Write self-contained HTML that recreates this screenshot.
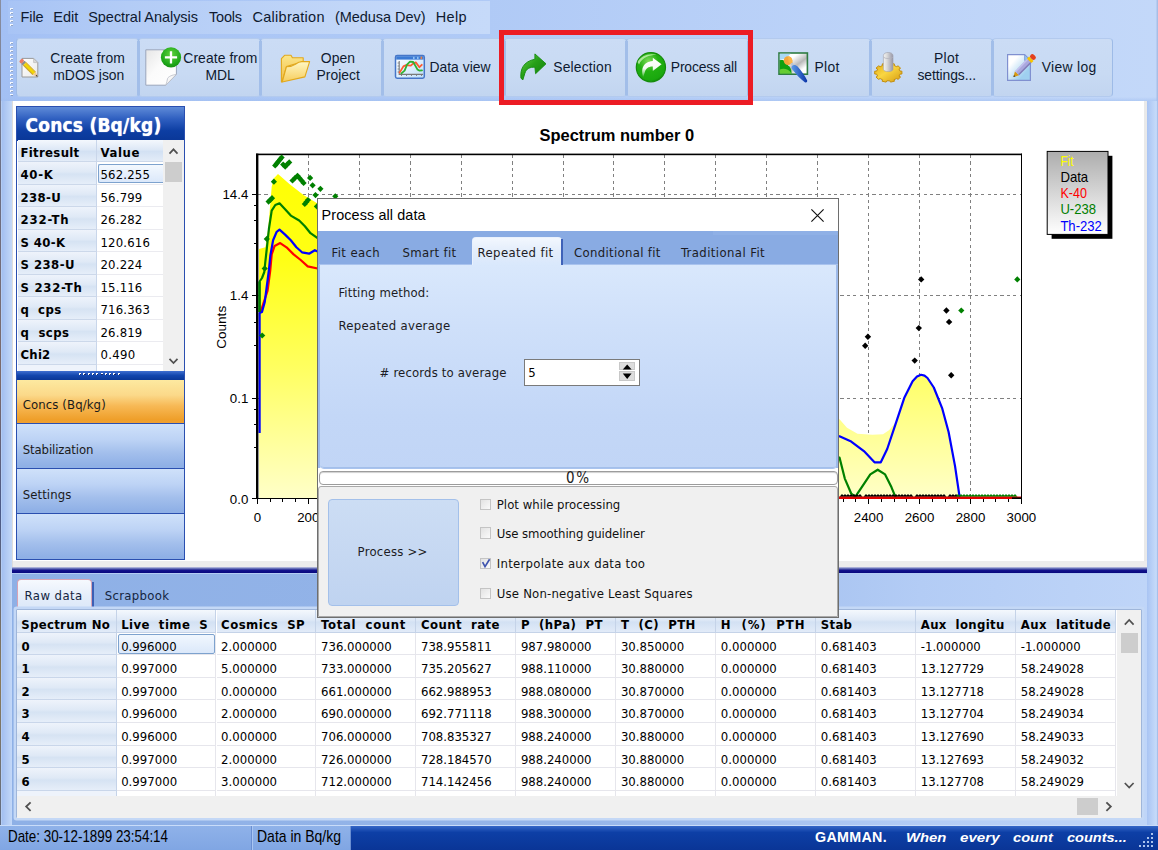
<!DOCTYPE html>
<html lang="en"><head><meta charset="utf-8"><title>Gamman - Process all data</title>
<style>
html,body{margin:0;padding:0;}
body{width:1158px;height:850px;overflow:hidden;background:#b3ccf4;font-family:"Liberation Sans",sans-serif;}
#app{position:relative;width:1158px;height:850px;overflow:hidden;}
#app div,#app span.t,#app svg{position:absolute;box-sizing:border-box;}
span.t{white-space:pre;line-height:normal;}
.tb{background:linear-gradient(#cbdcf5,#c8daf3 60%,#c2d5f0);border:1px solid #b3caee;border-left:1.4px solid #9ebbe7;border-right:1.4px solid #9ebbe7;border-radius:4px;}

</style></head>
<body>
<div id="app">
<div style="left:0px;top:0px;width:1158px;height:101px;background:linear-gradient(90deg,#a3c0f4 0,#a8c4f5 8%,#b0caf6 42%,#bbd2f8 70%,#c3d8f9 99.8%,#9fb6e0 100%);"></div>
<div style="left:0px;top:97px;width:1158px;height:4px;background:linear-gradient(rgba(160,190,240,0),rgba(160,190,240,.55));"></div>
<div style="left:0px;top:0px;width:1px;height:850px;background:linear-gradient(#8a8fa0,#6b6f86 20%,#7d6a6a 45%,#4a5a8a 60%,#8a7a5a 80%,#5a6a8a);"></div>
<div style="left:8px;top:1px;width:482px;height:33px;background:linear-gradient(90deg,#a8c4f5 0,#b3ccf6 25%,#c1d6f8 70%,#c6daf9 100%);"></div>
<div style="left:10px;top:8px;width:3px;height:19px;background:repeating-linear-gradient(#f4f8ff 0,#f4f8ff 2px,transparent 2px,transparent 4px);"></div>
<div style="left:10px;top:42px;width:3px;height:53px;background:repeating-linear-gradient(#f4f8ff 0,#f4f8ff 2px,transparent 2px,transparent 4px);"></div>
<div style="left:11px;top:9px;width:2px;height:19px;background:repeating-linear-gradient(#7f93b5 0,#7f93b5 1px,transparent 1px,transparent 4px);opacity:.8"></div>
<div style="left:11px;top:43px;width:2px;height:53px;background:repeating-linear-gradient(#7f93b5 0,#7f93b5 1px,transparent 1px,transparent 4px);opacity:.8"></div>
<span class=t style='left:20.50px;top:9.30px;font:400 14.5px "Liberation Sans", sans-serif;color:#0f1a30;letter-spacing:-0.094px;'>File</span>
<span class=t style='left:53.20px;top:9.30px;font:400 14.5px "Liberation Sans", sans-serif;color:#0f1a30;letter-spacing:0.075px;'>Edit</span>
<span class=t style='left:88.20px;top:9.30px;font:400 14.5px "Liberation Sans", sans-serif;color:#0f1a30;letter-spacing:-0.037px;'>Spectral Analysis</span>
<span class=t style='left:209.00px;top:9.30px;font:400 14.5px "Liberation Sans", sans-serif;color:#0f1a30;letter-spacing:-0.212px;'>Tools</span>
<span class=t style='left:252.50px;top:9.30px;font:400 14.5px "Liberation Sans", sans-serif;color:#0f1a30;letter-spacing:0.270px;'>Calibration</span>
<span class=t style='left:335.00px;top:9.30px;font:400 14.5px "Liberation Sans", sans-serif;color:#0f1a30;letter-spacing:-0.047px;'>(Medusa Dev)</span>
<span class=t style='left:435.80px;top:9.30px;font:400 14.5px "Liberation Sans", sans-serif;color:#0f1a30;letter-spacing:0.293px;'>Help</span>
<div class=tb style="left:15.6px;top:37.6px;width:123px;height:59.8px;"></div>
<div class=tb style="left:137.6px;top:37.6px;width:123px;height:59.8px;"></div>
<div class=tb style="left:259.6px;top:37.6px;width:123px;height:59.8px;"></div>
<div class=tb style="left:381.6px;top:37.6px;width:123px;height:59.8px;"></div>
<div class=tb style="left:503.6px;top:37.6px;width:123px;height:59.8px;"></div>
<div class=tb style="left:625.6px;top:37.6px;width:123px;height:59.8px;"></div>
<div class=tb style="left:747.6px;top:37.6px;width:123px;height:59.8px;"></div>
<div class=tb style="left:869.6px;top:37.6px;width:123px;height:59.8px;"></div>
<div class=tb style="left:991.6px;top:37.6px;width:121.4px;height:59.8px;"></div>
<div style="left:136.9px;top:40.5px;width:2.8px;height:54px;background:#a2bee9;"></div>
<div style="left:258.9px;top:40.5px;width:2.8px;height:54px;background:#a2bee9;"></div>
<div style="left:380.9px;top:40.5px;width:2.8px;height:54px;background:#a2bee9;"></div>
<div style="left:502.9px;top:40.5px;width:2.8px;height:54px;background:#a2bee9;"></div>
<div style="left:624.9px;top:40.5px;width:2.8px;height:54px;background:#a2bee9;"></div>
<div style="left:746.9px;top:40.5px;width:2.8px;height:54px;background:#a2bee9;"></div>
<div style="left:868.9px;top:40.5px;width:2.8px;height:54px;background:#a2bee9;"></div>
<div style="left:990.9px;top:40.5px;width:2.8px;height:54px;background:#a2bee9;"></div>
<span class=t style='left:50.30px;top:50.20px;font:400 13.9px "Liberation Sans", sans-serif;color:#0f1a30;letter-spacing:0.123px;'>Create from</span>
<span class=t style='left:53.30px;top:67.20px;font:400 13.9px "Liberation Sans", sans-serif;color:#0f1a30;'>mDOS json</span>
<span class=t style='left:183.30px;top:50.20px;font:400 13.9px "Liberation Sans", sans-serif;color:#0f1a30;letter-spacing:0.078px;'>Create from</span>
<span class=t style='left:205.50px;top:67.20px;font:400 13.9px "Liberation Sans", sans-serif;color:#0f1a30;letter-spacing:-0.009px;'>MDL</span>
<span class=t style='left:320.80px;top:50.20px;font:400 13.9px "Liberation Sans", sans-serif;color:#0f1a30;letter-spacing:0.054px;'>Open</span>
<span class=t style='left:316.50px;top:67.20px;font:400 13.9px "Liberation Sans", sans-serif;color:#0f1a30;letter-spacing:0.009px;'>Project</span>
<span class=t style='left:429.50px;top:58.50px;font:400 13.9px "Liberation Sans", sans-serif;color:#0f1a30;'>Data view</span>
<span class=t style='left:553.30px;top:58.50px;font:400 13.9px "Liberation Sans", sans-serif;color:#0f1a30;letter-spacing:0.149px;'>Selection</span>
<span class=t style='left:670.80px;top:58.50px;font:400 13.9px "Liberation Sans", sans-serif;color:#0f1a30;letter-spacing:-0.176px;'>Process all</span>
<span class=t style='left:814.50px;top:58.50px;font:400 13.9px "Liberation Sans", sans-serif;color:#0f1a30;letter-spacing:0.341px;'>Plot</span>
<span class=t style='left:934.00px;top:50.20px;font:400 13.9px "Liberation Sans", sans-serif;color:#0f1a30;letter-spacing:0.341px;'>Plot</span>
<span class=t style='left:917.50px;top:67.20px;font:400 13.9px "Liberation Sans", sans-serif;color:#0f1a30;letter-spacing:-0.087px;'>settings...</span>
<span class=t style='left:1041.80px;top:58.50px;font:400 13.9px "Liberation Sans", sans-serif;color:#0f1a30;letter-spacing:0.304px;'>View log</span>
<div style="left:2px;top:101px;width:10px;height:724px;background:linear-gradient(90deg,#a3bff0,#c3d8f8);"></div>
<div style="left:11.5px;top:101px;width:1132px;height:459.5px;background:#fff;border-left:1px solid #dcdcdc;"></div>
<div style="left:1143.5px;top:101px;width:3.8px;height:466.5px;background:#e9e9e9;"></div>
<div style="left:1147px;top:101px;width:11px;height:724px;background:linear-gradient(90deg,#a9c4f3,#c6dbfa 85%,#98b4e4);"></div>
<div style="left:11.5px;top:560.5px;width:1135.8px;height:7px;background:#ececec;border-left:1px solid #dcdcdc;"></div>
<div style="left:11.5px;top:567.3px;width:1135.8px;height:6.2px;background:linear-gradient(#c9cde6 0,#5c66b2 28%,#12128c 55%,#08087e 100%);"></div>
<div style="left:11.5px;top:573.5px;width:1135.8px;height:251.5px;background:linear-gradient(90deg,#8eb0e6,#95b5e9 50%,#b3ccf5 80%,#bfd5f8);"></div>
<div style="left:0px;top:824.5px;width:1158px;height:25.5px;background:linear-gradient(#3a6ccc,#0d3fa6 30%,#0a3596);"></div>
<div style="left:0px;top:824.5px;width:1158px;height:1.5px;background:#c9dcf9;"></div>
<div style="left:0px;top:826px;width:252px;height:24px;background:linear-gradient(#8fb2e9,#80a6e3);border-right:1px solid #6a8fd2;"></div>
<div style="left:252px;top:826px;width:98.5px;height:24px;background:linear-gradient(#8fb2e9,#80a6e3);border-right:1px solid #6a8fd2;border-left:1px solid #a9c6f2;"></div>
<span class=t style='left:8.00px;top:827.20px;font:400 16.2px "Liberation Sans", sans-serif;color:#000;transform:scaleX(0.8269);transform-origin:0 0;'>Date: 30-12-1899 23:54:14</span>
<span class=t style='left:256.60px;top:827.20px;font:400 16.2px "Liberation Sans", sans-serif;color:#000;transform:scaleX(0.8643);transform-origin:0 0;'>Data in Bq/kg</span>
<span class=t style='left:815.00px;top:829.00px;font:700 14.3px "Liberation Sans", sans-serif;color:#fff;letter-spacing:0.301px;'>GAMMAN.</span>
<span class=t style='left:906.40px;top:830.00px;font:italic 700 13.6px "Liberation Sans", sans-serif;color:#fff;transform:scaleX(1.0919);transform-origin:0 0;'>When</span>
<span class=t style='left:960.00px;top:830.00px;font:italic 700 13.6px "Liberation Sans", sans-serif;color:#fff;transform:scaleX(1.1145);transform-origin:0 0;'>every</span>
<span class=t style='left:1013.30px;top:830.00px;font:italic 700 13.6px "Liberation Sans", sans-serif;color:#fff;transform:scaleX(1.0757);transform-origin:0 0;'>count</span>
<span class=t style='left:1066.50px;top:830.00px;font:italic 700 13.6px "Liberation Sans", sans-serif;color:#fff;transform:scaleX(1.0682);transform-origin:0 0;'>counts...</span>
<svg style="left:1138px;top:832px" width="18" height="18" viewBox="0 0 18 18"><g fill="#a9c2ee"><rect x="13" y="1" width="2" height="2"/><rect x="9" y="5" width="2" height="2"/><rect x="13" y="5" width="2" height="2"/><rect x="5" y="9" width="2" height="2"/><rect x="9" y="9" width="2" height="2"/><rect x="13" y="9" width="2" height="2"/><rect x="1" y="13" width="2" height="2"/><rect x="5" y="13" width="2" height="2"/><rect x="9" y="13" width="2" height="2"/><rect x="13" y="13" width="2" height="2"/></g></svg>
<svg style="left:16px;top:40px" width="1100" height="56" viewBox="16 40 1100 56">
<defs>
<linearGradient id="gPaper" x1="0" y1="0" x2="1" y2="1"><stop offset="0" stop-color="#ffffff"/><stop offset="1" stop-color="#e9e9e9"/></linearGradient>
<linearGradient id="gPage2" x1="0" y1="0" x2="1" y2="1"><stop offset="0" stop-color="#e6e6e6"/><stop offset="0.45" stop-color="#fbfbfb"/><stop offset="1" stop-color="#ffffff"/></linearGradient>
<linearGradient id="gFoldB" x1="0" y1="0" x2="0" y2="1"><stop offset="0" stop-color="#fbe68a"/><stop offset="1" stop-color="#f2bd42"/></linearGradient>
<linearGradient id="gFoldF" x1="0" y1="0" x2="0" y2="1"><stop offset="0" stop-color="#fff7c4"/><stop offset="1" stop-color="#f6cd5c"/></linearGradient>
<radialGradient id="gPlus" cx="0.5" cy="0.35" r="0.7"><stop offset="0" stop-color="#5fd23a"/><stop offset="0.7" stop-color="#1fa81a"/><stop offset="1" stop-color="#138a10"/></radialGradient>
<linearGradient id="gArr" x1="0" y1="0" x2="1" y2="1"><stop offset="0" stop-color="#6fd44c"/><stop offset="0.45" stop-color="#27a018"/><stop offset="1" stop-color="#0f7c08"/></linearGradient>
<radialGradient id="gBall" cx="0.42" cy="0.3" r="0.75"><stop offset="0" stop-color="#7fdc5a"/><stop offset="0.45" stop-color="#22b012"/><stop offset="0.85" stop-color="#1aa80e"/><stop offset="1" stop-color="#128a0a"/></radialGradient>
<linearGradient id="gWArr" x1="0" y1="0" x2="0" y2="1"><stop offset="0" stop-color="#ffffff"/><stop offset="0.55" stop-color="#ffffff" stop-opacity="0.95"/><stop offset="1" stop-color="#ffffff" stop-opacity="0.15"/></linearGradient>
<linearGradient id="gWin" x1="0" y1="0" x2="1" y2="1"><stop offset="0" stop-color="#ffffff"/><stop offset="1" stop-color="#bfe0fb"/></linearGradient>
<linearGradient id="gCyl" x1="0" y1="0" x2="1" y2="0"><stop offset="0" stop-color="#f2f2f2"/><stop offset="0.35" stop-color="#dcdcdc"/><stop offset="1" stop-color="#9797a8"/></linearGradient>
<linearGradient id="gGear" x1="0" y1="0" x2="1" y2="1"><stop offset="0" stop-color="#e2aa14"/><stop offset="0.45" stop-color="#f9d642"/><stop offset="1" stop-color="#d69a0e"/></linearGradient>
<linearGradient id="gPic" x1="0" y1="0" x2="1" y2="1"><stop offset="0.35" stop-color="#ffffff"/><stop offset="0.6" stop-color="#b9b9b9"/><stop offset="0.8" stop-color="#ffffff"/></linearGradient>
<linearGradient id="gBrush" x1="0" y1="0" x2="1" y2="0"><stop offset="0" stop-color="#5b9be8"/><stop offset="1" stop-color="#0b34a8"/></linearGradient>
<linearGradient id="gLog" x1="0" y1="0" x2="1" y2="1"><stop offset="0.25" stop-color="#ffffff"/><stop offset="0.75" stop-color="#9fd0f0"/></linearGradient>
</defs>
<path d="M22 58.4H33.6L37.8 62.6V77H22Z" fill="url(#gPaper)" stroke="#9a9a9a" stroke-width="1"/>
<path d="M33.6 58.4V62.6H37.8Z" fill="#d8d8d8" stroke="#b0b0b0" stroke-width="0.6"/>
<g transform="translate(21.2,60.6) rotate(44.5)"><rect x="-1" y="-2.3" width="3.4" height="4.6" rx="1.4" fill="#ee7a62"/><rect x="2.4" y="-2.3" width="2.4" height="4.6" fill="#8c8c8c"/><rect x="4.8" y="-2.3" width="13.4" height="4.6" fill="#f4d800"/><rect x="4.8" y="-2.3" width="13.4" height="1.1" fill="#d8b04a"/><rect x="4.8" y="1.2" width="13.4" height="1.1" fill="#caa040"/><path d="M18.2 -2.3L22.8 0L18.2 2.3Z" fill="#f0c890"/><path d="M21 -0.9L23 0L21 0.9Z" fill="#3a3020"/></g>
<path d="M145.8 49.8H176.4V74.3L165.8 85.2H145.8Z" fill="url(#gPage2)" stroke="#9aa6bc" stroke-width="1"/>
<path d="M176.4 74.3C172 75 168.5 76.5 167.6 78.4C167.2 80.5 166.6 83 165.8 85.2Z" fill="#f7f7f7" stroke="#b9bcc6" stroke-width="0.8"/>
<circle cx="171" cy="57.4" r="10.1" fill="url(#gPlus)"/>
<path d="M164.9 56.3H177.1V58.6H164.9Z M169.85 51.3H172.15V63.6H169.85Z" fill="#fff"/>
<path d="M281.4 58.6L284.6 55.3H291L292.4 57.8H303.2V62H301.6L286.4 66.6L282 81.9H281.4Z" fill="url(#gFoldB)" stroke="#e2a81c" stroke-width="1.1" stroke-linejoin="round"/>
<path d="M282.2 82L286.4 66.8C290 66.8 293 65.8 295.4 64.2C297.6 62.6 299.4 61.6 301.8 61.6H309.6L304.9 76.9L282.2 82Z" fill="url(#gFoldF)" stroke="#e2a81c" stroke-width="1.1" stroke-linejoin="round"/>
<rect x="395.5" y="55.6" width="28.8" height="22.6" rx="1.6" fill="url(#gWin)" stroke="#4676c8" stroke-width="1.5"/>
<rect x="396.2" y="56.2" width="27.4" height="3.4" fill="#3b7ad4"/><rect x="413" y="56.8" width="1.6" height="2.2" fill="#8fc0f4"/><rect x="417" y="56.8" width="1.6" height="2.2" fill="#8fc0f4"/><rect x="420.6" y="56.6" width="1.6" height="2.6" fill="#f08040"/>
<path d="M399.2 61V74.4H423" fill="none" stroke="#7a7a7a" stroke-width="1.1"/><path d="M401.5 74.4V76M406.5 74.4V76M411.5 74.4V76M416.5 74.4V76M421.5 74.4V76M397.6 63H399.2M397.6 66H399.2M397.6 69H399.2M397.6 72H399.2" stroke="#7a7a7a" stroke-width="0.9"/>
<path d="M399.6 72.6L403.4 66.4L405.6 65.2L410.8 65.6L413 63.6L415.8 62.4L419.4 67.2L421.8 64.8" fill="none" stroke="#ff5a30" stroke-width="1.8" stroke-linejoin="round" stroke-linecap="round"/>
<path d="M401.4 73.4L404.6 70.6L407 64.6L410 61.6L413.2 62L417.4 69.4L419.2 70.6L422 70.3" fill="none" stroke="#2fb02f" stroke-width="1.8" stroke-linejoin="round" stroke-linecap="round"/>
<path d="M534.9 53.9L546 63.8L535.6 73.7L534.9 67.3C530.2 66.9 526.4 68.4 524.9 73.2L522.8 80L520.9 78C520.2 69.6 523 61.6 534.9 59.2Z" fill="url(#gArr)" stroke="#148a0c" stroke-width="0.9" stroke-linejoin="round"/>
<circle cx="650.9" cy="67.2" r="14.6" fill="url(#gBall)" stroke="#168c0c" stroke-width="1.2"/>
<path d="M637.6 62C641 55.5 650 52.6 657.5 55.2C652 54.6 642.5 56.6 639 64.5Z" fill="#c8f2b4" opacity="0.8"/>
<path d="M652.8 57.8L661.6 64.3L652.8 70.9V66.6C648.4 66.5 645.8 68.6 644.9 72L643.2 77C641 70.6 642 61.8 652.8 61Z" fill="url(#gWArr)"/>
<rect x="779" y="53" width="28.4" height="21.2" fill="url(#gPic)" stroke="#2f7c42" stroke-width="1.6"/>
<path d="M779.8 53.8H790.6L786 58.4L779.8 60Z" fill="#a9d9f6"/>
<path d="M779.8 60.2C784 59.2 787.2 61.6 788 65.4C790.2 66.4 791.6 69.4 791.6 73.4H779.8Z" fill="#10a010"/>
<path d="M779.8 69.6C783.2 68 788.4 68.6 791.6 73.4H779.8Z" fill="#66cc33"/>
<circle cx="788" cy="60.6" r="4.3" fill="#f3a63a"/><path d="M788 56.3C791 57 792.8 59.4 792.6 62.2L790.8 64.4L788.6 62Z" fill="#fbb646"/>
<path d="M790.6 63.8L792.6 62.4L794 64.8L792 66.2Z" fill="#b9c4d4"/>
<path d="M791.8 66.2C793.4 64.2 795.8 64.6 797.6 66.6C801.6 71 805 76 807.2 80.6C807.4 82.4 806.2 83 804.8 82.2C800.4 79 796 74.4 792.4 69.6C791.6 68.4 791.2 67.2 791.8 66.2Z" fill="url(#gBrush)"/>
<polygon points="901.9,71.2 901.9,74.0 900.0,74.1 899.0,76.1 900.6,77.0 898.1,79.3 896.4,78.6 894.0,79.8 894.5,81.2 890.5,82.1 889.8,80.8 886.8,80.8 886.1,82.1 882.1,81.2 882.6,79.8 880.2,78.6 878.5,79.3 876.0,77.0 877.6,76.1 876.6,74.1 874.7,74.0 874.7,71.2 876.6,71.1 877.6,69.1 876.0,68.2 878.5,65.9 880.2,66.6 882.6,65.4 882.1,64.0 886.1,63.1 886.8,64.4 889.8,64.4 890.5,63.1 894.5,64.0 894.0,65.4 896.4,66.6 898.1,65.9 900.6,68.2 899.0,69.1 900.0,71.1" fill="url(#gGear)" stroke="#c48e0c" stroke-width="1" stroke-linejoin="round"/>
<path d="M883.4 55.6C883.4 51.4 893 51.4 893 55.6V69.2C893 72.4 883.4 72.4 883.4 69.2Z" fill="url(#gCyl)" stroke="#a0a0a8" stroke-width="0.6"/>
<path d="M883.6 57.2C885 59 891.4 59 892.8 57.2" fill="none" stroke="#b4b4bc" stroke-width="0.8"/>
<path d="M1007.6 54.6H1024.6L1030.4 60.4V80.4H1007.6Z" fill="url(#gLog)" stroke="#8090d0" stroke-width="1.2"/>
<path d="M1024.6 54.6V60.4H1030.4Z" fill="#8fc4f0" stroke="#8090d0" stroke-width="0.8"/>
<g transform="translate(1013.4,77) rotate(-45.6)"><path d="M0 0L5.2 -2.9V2.9Z" fill="#d89a10"/><path d="M0 0L1.9 -1.05V1.05Z" fill="#3a3a3a"/><rect x="5.2" y="-2.9" width="17.4" height="5.8" fill="#aaa8de"/><rect x="5.2" y="-2.9" width="17.4" height="1.4" fill="#c4c2ee"/><rect x="5.2" y="1.5" width="17.4" height="1.4" fill="#7f7cb8"/><rect x="22.6" y="-3.1" width="3" height="6.2" fill="#f7c400"/><rect x="25.6" y="-3.1" width="4.6" height="6.2" rx="2.2" fill="#e4401c"/></g>
</svg>
<div style="left:16px;top:106px;width:169px;height:454px;background:#fff;border:1.5px solid #2a4fb0;"></div>
<div style="left:17px;top:107px;width:167px;height:33.5px;background:linear-gradient(#5f8bd8,#2f5fc0 35%,#0d3ea3 70%,#0a3797);"></div>
<span class=t style='left:25.50px;top:114.30px;font:700 19px "DejaVu Sans Condensed", "DejaVu Sans", "Liberation Sans", sans-serif;color:#fff;letter-spacing:0.196px;text-shadow:0 0 1px #dfe8ff;'>Concs (Bq/kg)</span>
<div style="left:17.5px;top:140.0px;width:79.0px;height:22.47px;background:linear-gradient(#f4f8fd,#dde8f6 45%,#d3e1f3 55%,#e3ecf8);border-right:1px solid #c9d6ea;border-bottom:1px solid #ccd8ea;"></div>
<div style="left:96.5px;top:140.0px;width:66.0px;height:22.47px;background:linear-gradient(#f4f8fd,#dde8f6 45%,#d3e1f3 55%,#e3ecf8);border-bottom:1px solid #ccd8ea;"></div>
<div style="left:17.5px;top:162.47px;width:79.0px;height:22.47px;background:linear-gradient(#eef3fb,#dfe9f6 45%,#d6e3f3 55%,#e6eef9);border-right:1px solid #c9d6ea;border-bottom:1px solid #ccd8ea;"></div>
<div style="left:96.5px;top:162.47px;width:66.0px;height:22.47px;background:#fff;border-bottom:1px solid #ebebf0;"></div>
<div style="left:17.5px;top:184.94px;width:79.0px;height:22.47px;background:linear-gradient(#eef3fb,#dfe9f6 45%,#d6e3f3 55%,#e6eef9);border-right:1px solid #c9d6ea;border-bottom:1px solid #ccd8ea;"></div>
<div style="left:96.5px;top:184.94px;width:66.0px;height:22.47px;background:#fff;border-bottom:1px solid #ebebf0;"></div>
<div style="left:17.5px;top:207.41px;width:79.0px;height:22.47px;background:linear-gradient(#eef3fb,#dfe9f6 45%,#d6e3f3 55%,#e6eef9);border-right:1px solid #c9d6ea;border-bottom:1px solid #ccd8ea;"></div>
<div style="left:96.5px;top:207.41px;width:66.0px;height:22.47px;background:#fff;border-bottom:1px solid #ebebf0;"></div>
<div style="left:17.5px;top:229.88px;width:79.0px;height:22.47px;background:linear-gradient(#eef3fb,#dfe9f6 45%,#d6e3f3 55%,#e6eef9);border-right:1px solid #c9d6ea;border-bottom:1px solid #ccd8ea;"></div>
<div style="left:96.5px;top:229.88px;width:66.0px;height:22.47px;background:#fff;border-bottom:1px solid #ebebf0;"></div>
<div style="left:17.5px;top:252.35px;width:79.0px;height:22.47px;background:linear-gradient(#eef3fb,#dfe9f6 45%,#d6e3f3 55%,#e6eef9);border-right:1px solid #c9d6ea;border-bottom:1px solid #ccd8ea;"></div>
<div style="left:96.5px;top:252.35px;width:66.0px;height:22.47px;background:#fff;border-bottom:1px solid #ebebf0;"></div>
<div style="left:17.5px;top:274.82px;width:79.0px;height:22.47px;background:linear-gradient(#eef3fb,#dfe9f6 45%,#d6e3f3 55%,#e6eef9);border-right:1px solid #c9d6ea;border-bottom:1px solid #ccd8ea;"></div>
<div style="left:96.5px;top:274.82px;width:66.0px;height:22.47px;background:#fff;border-bottom:1px solid #ebebf0;"></div>
<div style="left:17.5px;top:297.28999999999996px;width:79.0px;height:22.47px;background:linear-gradient(#eef3fb,#dfe9f6 45%,#d6e3f3 55%,#e6eef9);border-right:1px solid #c9d6ea;border-bottom:1px solid #ccd8ea;"></div>
<div style="left:96.5px;top:297.28999999999996px;width:66.0px;height:22.47px;background:#fff;border-bottom:1px solid #ebebf0;"></div>
<div style="left:17.5px;top:319.76px;width:79.0px;height:22.47px;background:linear-gradient(#eef3fb,#dfe9f6 45%,#d6e3f3 55%,#e6eef9);border-right:1px solid #c9d6ea;border-bottom:1px solid #ccd8ea;"></div>
<div style="left:96.5px;top:319.76px;width:66.0px;height:22.47px;background:#fff;border-bottom:1px solid #ebebf0;"></div>
<div style="left:17.5px;top:342.23px;width:79.0px;height:22.47px;background:linear-gradient(#eef3fb,#dfe9f6 45%,#d6e3f3 55%,#e6eef9);border-right:1px solid #c9d6ea;border-bottom:1px solid #ccd8ea;"></div>
<div style="left:96.5px;top:342.23px;width:66.0px;height:22.47px;background:#fff;border-bottom:1px solid #ebebf0;"></div>
<div style="left:17.5px;top:364.7px;width:79.0px;height:6.5px;background:#eef3fb;border-right:1px solid #c9d6ea;"></div>
<div style="left:97.5px;top:163.5px;width:65.0px;height:19.5px;background:linear-gradient(#f3f8fe,#dbe8fa);border:1px solid #7da2ce;border-right:none;border-radius:2px 0 0 2px;"></div>
<span class=t style='left:20.50px;top:144.90px;font:700 13px "DejaVu Sans Condensed", "DejaVu Sans", "Liberation Sans", sans-serif;color:#000;letter-spacing:0.312px;'>Fitresult</span>
<span class=t style='left:100.50px;top:144.90px;font:700 13px "DejaVu Sans Condensed", "DejaVu Sans", "Liberation Sans", sans-serif;color:#000;letter-spacing:0.600px;'>Value</span>
<span class=t style='left:20.50px;top:167.37px;font:700 13px "DejaVu Sans Condensed", "DejaVu Sans", "Liberation Sans", sans-serif;color:#000;letter-spacing:0.699px;'>40-K</span>
<span class=t style='left:100.50px;top:167.37px;font:400 13px "DejaVu Sans Condensed", "DejaVu Sans", "Liberation Sans", sans-serif;color:#000;letter-spacing:0.163px;'>562.255</span>
<span class=t style='left:20.50px;top:189.84px;font:700 13px "DejaVu Sans Condensed", "DejaVu Sans", "Liberation Sans", sans-serif;color:#000;letter-spacing:0.347px;'>238-U</span>
<span class=t style='left:100.50px;top:189.84px;font:400 13px "DejaVu Sans Condensed", "DejaVu Sans", "Liberation Sans", sans-serif;color:#000;letter-spacing:0.180px;'>56.799</span>
<span class=t style='left:20.50px;top:212.31px;font:700 13px "DejaVu Sans Condensed", "DejaVu Sans", "Liberation Sans", sans-serif;color:#000;letter-spacing:0.888px;'>232-Th</span>
<span class=t style='left:100.50px;top:212.31px;font:400 13px "DejaVu Sans Condensed", "DejaVu Sans", "Liberation Sans", sans-serif;color:#000;letter-spacing:0.180px;'>26.282</span>
<span class=t style='left:20.50px;top:234.78px;font:700 13px "DejaVu Sans Condensed", "DejaVu Sans", "Liberation Sans", sans-serif;color:#000;letter-spacing:0.383px;'>S 40-K</span>
<span class=t style='left:100.50px;top:234.78px;font:400 13px "DejaVu Sans Condensed", "DejaVu Sans", "Liberation Sans", sans-serif;color:#000;letter-spacing:0.163px;'>120.616</span>
<span class=t style='left:20.50px;top:257.25px;font:700 13px "DejaVu Sans Condensed", "DejaVu Sans", "Liberation Sans", sans-serif;color:#000;letter-spacing:0.462px;'>S 238-U</span>
<span class=t style='left:100.50px;top:257.25px;font:400 13px "DejaVu Sans Condensed", "DejaVu Sans", "Liberation Sans", sans-serif;color:#000;letter-spacing:0.180px;'>20.224</span>
<span class=t style='left:20.50px;top:279.72px;font:700 13px "DejaVu Sans Condensed", "DejaVu Sans", "Liberation Sans", sans-serif;color:#000;letter-spacing:0.729px;'>S 232-Th</span>
<span class=t style='left:100.50px;top:279.72px;font:400 13px "DejaVu Sans Condensed", "DejaVu Sans", "Liberation Sans", sans-serif;color:#000;letter-spacing:0.180px;'>15.116</span>
<span class=t style='left:20.50px;top:302.19px;font:700 13px "DejaVu Sans Condensed", "DejaVu Sans", "Liberation Sans", sans-serif;color:#000;letter-spacing:0.370px;'>q  cps</span>
<span class=t style='left:100.50px;top:302.19px;font:400 13px "DejaVu Sans Condensed", "DejaVu Sans", "Liberation Sans", sans-serif;color:#000;letter-spacing:0.163px;'>716.363</span>
<span class=t style='left:20.50px;top:324.66px;font:700 13px "DejaVu Sans Condensed", "DejaVu Sans", "Liberation Sans", sans-serif;color:#000;letter-spacing:0.464px;'>q  scps</span>
<span class=t style='left:100.50px;top:324.66px;font:400 13px "DejaVu Sans Condensed", "DejaVu Sans", "Liberation Sans", sans-serif;color:#000;letter-spacing:0.180px;'>26.819</span>
<span class=t style='left:20.50px;top:347.13px;font:700 13px "DejaVu Sans Condensed", "DejaVu Sans", "Liberation Sans", sans-serif;color:#000;letter-spacing:0.234px;'>Chi2</span>
<span class=t style='left:100.50px;top:347.13px;font:400 13px "DejaVu Sans Condensed", "DejaVu Sans", "Liberation Sans", sans-serif;color:#000;letter-spacing:0.303px;'>0.490</span>
<div style="left:162.5px;top:140px;width:21.0px;height:231.2px;background:#f0f0f0;"></div>
<div style="left:164.5px;top:161.5px;width:17.0px;height:20.5px;background:#cdcdcd;"></div>
<svg style="left:162.5px;top:140px" width="21" height="231" viewBox="0 0 21 231"><path d="M6.5 13.6 L10.5 9.3 L14.5 13.6" fill="none" stroke="#505050" stroke-width="1.7"/><path d="M6.5 218.8 L10.5 223.1 L14.5 218.8" fill="none" stroke="#505050" stroke-width="1.7"/></svg>
<div style="left:17px;top:371.2px;width:167px;height:8.6px;background:linear-gradient(#3f6fd0,#1246ad 50%,#0a3797);"></div>
<div style="left:79px;top:372.8px;width:43px;height:2.2px;background:repeating-linear-gradient(90deg,#fff 0,#fff 2px,transparent 2px,transparent 4.3px);"></div>
<div style="left:80px;top:373.8px;width:43px;height:1.6px;background:repeating-linear-gradient(90deg,#1a2a6a 0,#1a2a6a 1.2px,transparent 1.2px,transparent 4.3px);"></div>
<div style="left:17px;top:379.8px;width:167px;height:44.2px;background:linear-gradient(#fde9a0,#fbd98a 35%,#f7b956 60%,#ef9f2a 92%,#f0a030);border-bottom:1.5px solid #2a4fb0;"></div>
<div style="left:17px;top:424px;width:167px;height:45.3px;background:linear-gradient(#cfe1fa,#bdd3f5 35%,#a3bfec 65%,#8fb0e6 95%);border-bottom:1.5px solid #2a4fb0;"></div>
<div style="left:17px;top:469.3px;width:167px;height:45px;background:linear-gradient(#cfe1fa,#bdd3f5 35%,#a3bfec 65%,#8fb0e6 95%);border-bottom:1.5px solid #2a4fb0;"></div>
<div style="left:17px;top:514.3px;width:167px;height:44.5px;background:linear-gradient(#cfe1fa,#bdd3f5 35%,#a3bfec 65%,#8fb0e6 95%);"></div>
<span class=t style='left:22.80px;top:396.80px;font:400 13px "DejaVu Sans Condensed", "DejaVu Sans", "Liberation Sans", sans-serif;color:#1a1a1a;letter-spacing:0.100px;'>Concs (Bq/kg)</span>
<span class=t style='left:22.80px;top:441.80px;font:400 13px "DejaVu Sans Condensed", "DejaVu Sans", "Liberation Sans", sans-serif;color:#1a1a1a;letter-spacing:-0.120px;'>Stabilization</span>
<span class=t style='left:22.80px;top:486.80px;font:400 13px "DejaVu Sans Condensed", "DejaVu Sans", "Liberation Sans", sans-serif;color:#1a1a1a;letter-spacing:0.064px;'>Settings</span>
<svg style="left:186px;top:102px" width="957" height="458" viewBox="186 102 957 458">
<defs><linearGradient id="yg" gradientUnits="userSpaceOnUse" x1="0" y1="155" x2="0" y2="498"><stop offset="0" stop-color="#ffff00"/><stop offset="0.3" stop-color="#ffff14"/><stop offset="0.62" stop-color="#ffff60"/><stop offset="0.85" stop-color="#ffffa0"/><stop offset="1" stop-color="#ffffc8"/></linearGradient><linearGradient id="lg" x1="0" y1="0" x2="0" y2="1"><stop offset="0" stop-color="#adadad"/><stop offset="1" stop-color="#ffffff"/></linearGradient></defs>
<text x="539.5" y="140.9" font-family="Liberation Sans, sans-serif" font-size="16.6" font-weight="700" fill="#000" textLength="154.6" lengthAdjust="spacingAndGlyphs">Spectrum number 0</text>
<path d="M308.3 155V498 M359.3 155V498 M410.2 155V498 M461.1 155V498 M512.1 155V498 M563.0 155V498 M613.9 155V498 M664.9 155V498 M715.8 155V498 M766.7 155V498 M817.7 155V498 M868.6 155V498 M919.5 155V498 M970.5 155V498 M258 194.3H1021 M258 295.5H1021 M258 398.1H1021" stroke="#808080" stroke-width="1" stroke-dasharray="3.2 3.2" fill="none" shape-rendering="crispEdges"/>
<polygon fill="url(#yg)" points="259,498.5 259,249 265.4,247.3 268.2,229 270.3,203.6 271.7,186.7 273.9,178.2 278,174 289.4,183.9 303.5,195.1 317.6,203.6 839.5,419.3 847,427.8 857.5,433.7 872.4,434.8 883,434.2 889.3,429.9 894.6,423.6 895.7,423.6 904.2,398.1 912.6,381.2 917,376.6 921.1,374.8 924.5,375.6 927.5,378 933.8,387.5 942.3,408.7 948.6,432 955,465.9 959.7,497.7 959.7,498.5"/>
<polyline fill="none" stroke="#ff0000" stroke-width="2.2" stroke-linejoin="round" points="259.6,312 261.2,310 267.5,291 270.3,270 271.7,254.4 274.6,245.9 280.2,243.1 286.5,247.3 293.6,254.4 300.7,260 307.7,266.4 317.6,268.5 500,400 839,497.8 1021,497.8"/>
<polyline fill="none" stroke="#008000" stroke-width="2.2" stroke-linejoin="round" points="259.6,312 259.6,281.5 262,278 264.3,272 265.3,262 266.8,248.7 268.9,229 271.7,210.7 275.3,205 279.5,203.3 285.1,209.2 290.8,215.6 299.2,220.5 304.9,226.2 310.5,233.2 317.6,238.2 500,400 839.5,457.5 844.8,478.6 851.2,493.5 855.4,496.7 861.8,487.1 870.3,474.4 877.7,469.7 885.1,474.4 891.4,487.1 895.7,497.7"/>
<polyline fill="none" stroke="#0000ff" stroke-width="2.2" stroke-linejoin="round" points="259.6,433 259.6,313 262,312 264.7,302.3 268.9,270 270.3,255.8 273.1,240.3 276.7,231.8 279.5,229.7 285.1,234.6 290.8,240.3 296.4,247.3 302,252.3 309.1,253.7 314.8,250.2 317.6,251.6 500,380 839.5,436.3 851.2,441.6 863.9,451.1 874.5,462.3 880.8,462.3 887.2,449 895.7,423.6 904.2,398.1 912.6,381.2 917,376.6 921.1,374.8 924.5,375.6 927.5,378 933.8,387.5 942.3,408.7 948.6,432 955,465.9 959.7,497.7"/>
<rect x="256" y="153.6" width="2.4" height="345" fill="#000"/>
<rect x="256" y="153.6" width="766" height="1.6" fill="#000"/>
<rect x="1021" y="153.6" width="1" height="345" fill="#000"/>
<rect x="256" y="498" width="584" height="1" fill="#000"/>
<rect x="258.4" y="282" width="2.2" height="30" fill="#008000"/>
<path d="M252 194.3H256 M252 295.5H256 M252 398.1H256 M252 498.5H256 M254 205.8H256 M254 220.8H256 M254 243.8H256 M254 307.0H256 M254 322.0H256 M254 345.0H256 M254 409.6H256 M254 424.6H256 M254 447.6H256 M257.4 499V504 M270.1 499V501.5 M282.9 499V501.5 M295.6 499V501.5 M308.3 499V504 M321.1 499V501.5 M333.8 499V501.5 M346.5 499V501.5 M359.3 499V504 M372.0 499V501.5 M384.7 499V501.5 M397.5 499V501.5 M410.2 499V504 M422.9 499V501.5 M435.7 499V501.5 M448.4 499V501.5 M461.1 499V504 M473.9 499V501.5 M486.6 499V501.5 M499.3 499V501.5 M512.1 499V504 M524.8 499V501.5 M537.5 499V501.5 M550.3 499V501.5 M563.0 499V504 M575.7 499V501.5 M588.5 499V501.5 M601.2 499V501.5 M613.9 499V504 M626.7 499V501.5 M639.4 499V501.5 M652.1 499V501.5 M664.9 499V504 M677.6 499V501.5 M690.3 499V501.5 M703.1 499V501.5 M715.8 499V504 M728.5 499V501.5 M741.3 499V501.5 M754.0 499V501.5 M766.7 499V504 M779.5 499V501.5 M792.2 499V501.5 M804.9 499V501.5 M817.7 499V504 M830.4 499V501.5 M843.1 499V501.5 M855.9 499V501.5 M868.6 499V504 M881.3 499V501.5 M894.1 499V501.5 M906.8 499V501.5 M919.5 499V504 M932.3 499V501.5 M945.0 499V501.5 M957.7 499V501.5 M970.5 499V504 M983.2 499V501.5 M995.9 499V501.5 M1008.7 499V501.5 M1021.4 499V504" stroke="#000" stroke-width="1" fill="none" shape-rendering="crispEdges"/>
<text x="248.3" y="199.10000000000002" font-family="Liberation Sans, sans-serif" font-size="13.3" text-anchor="end" fill="#000">14.4</text>
<text x="248.3" y="300.3" font-family="Liberation Sans, sans-serif" font-size="13.3" text-anchor="end" fill="#000">1.4</text>
<text x="248.3" y="402.90000000000003" font-family="Liberation Sans, sans-serif" font-size="13.3" text-anchor="end" fill="#000">0.1</text>
<text x="248.3" y="503.6" font-family="Liberation Sans, sans-serif" font-size="13.3" text-anchor="end" fill="#000">0.0</text>
<text x="257.4" y="521.8" font-family="Liberation Sans, sans-serif" font-size="13.3" text-anchor="middle" fill="#000">0</text>
<text x="308.3" y="521.8" font-family="Liberation Sans, sans-serif" font-size="13.3" text-anchor="middle" fill="#000">200</text>
<text x="359.3" y="521.8" font-family="Liberation Sans, sans-serif" font-size="13.3" text-anchor="middle" fill="#000">400</text>
<text x="410.2" y="521.8" font-family="Liberation Sans, sans-serif" font-size="13.3" text-anchor="middle" fill="#000">600</text>
<text x="461.1" y="521.8" font-family="Liberation Sans, sans-serif" font-size="13.3" text-anchor="middle" fill="#000">800</text>
<text x="512.1" y="521.8" font-family="Liberation Sans, sans-serif" font-size="13.3" text-anchor="middle" fill="#000">1000</text>
<text x="563.0" y="521.8" font-family="Liberation Sans, sans-serif" font-size="13.3" text-anchor="middle" fill="#000">1200</text>
<text x="613.9" y="521.8" font-family="Liberation Sans, sans-serif" font-size="13.3" text-anchor="middle" fill="#000">1400</text>
<text x="664.9" y="521.8" font-family="Liberation Sans, sans-serif" font-size="13.3" text-anchor="middle" fill="#000">1600</text>
<text x="715.8" y="521.8" font-family="Liberation Sans, sans-serif" font-size="13.3" text-anchor="middle" fill="#000">1800</text>
<text x="766.7" y="521.8" font-family="Liberation Sans, sans-serif" font-size="13.3" text-anchor="middle" fill="#000">2000</text>
<text x="817.7" y="521.8" font-family="Liberation Sans, sans-serif" font-size="13.3" text-anchor="middle" fill="#000">2200</text>
<text x="868.6" y="521.8" font-family="Liberation Sans, sans-serif" font-size="13.3" text-anchor="middle" fill="#000">2400</text>
<text x="919.5" y="521.8" font-family="Liberation Sans, sans-serif" font-size="13.3" text-anchor="middle" fill="#000">2600</text>
<text x="970.5" y="521.8" font-family="Liberation Sans, sans-serif" font-size="13.3" text-anchor="middle" fill="#000">2800</text>
<text x="1021.4" y="521.8" font-family="Liberation Sans, sans-serif" font-size="13.3" text-anchor="middle" fill="#000">3000</text>
<text x="226.2" y="348.8" font-family="Liberation Sans, sans-serif" font-size="13.3" fill="#000" textLength="43" lengthAdjust="spacingAndGlyphs" transform="rotate(-90 226.2 348.8)">Counts</text>
<path d="M272.1 165.4L275.2 162.3L278.3 165.4L275.2 168.5Z" fill="#008000"/>
<path d="M273.7 163.4L276.8 160.3L279.9 163.4L276.8 166.5Z" fill="#008000"/>
<path d="M275.3 161.4L278.4 158.3L281.5 161.4L278.4 164.5Z" fill="#008000"/>
<path d="M276.9 159.4L280 156.3L283.1 159.4L280 162.5Z" fill="#008000"/>
<path d="M278.5 157.6L281.6 154.5L284.7 157.6L281.6 160.7Z" fill="#008000"/>
<path d="M280.1 164.6L283.2 161.5L286.3 164.6L283.2 167.7Z" fill="#008000"/>
<path d="M282.1 166.6L285.2 163.5L288.3 166.6L285.2 169.7Z" fill="#008000"/>
<path d="M284.1 164.4L287.2 161.3L290.3 164.4L287.2 167.5Z" fill="#008000"/>
<path d="M286.1 162.4L289.2 159.3L292.3 162.4L289.2 165.5Z" fill="#008000"/>
<path d="M270.8 181.7L273.9 178.6L277.0 181.7L273.9 184.8Z" fill="#008000"/>
<path d="M289.4 180.5L292.5 177.4L295.6 180.5L292.5 183.6Z" fill="#008000"/>
<path d="M291.9 178L295 174.9L298.1 178L295 181.1Z" fill="#008000"/>
<path d="M294.4 175.8L297.5 172.7L300.6 175.8L297.5 178.9Z" fill="#008000"/>
<path d="M296.5 178.2L299.6 175.1L302.7 178.2L299.6 181.3Z" fill="#008000"/>
<path d="M298.5 180.6L301.6 177.5L304.7 180.6L301.6 183.7Z" fill="#008000"/>
<path d="M300.5 183L303.6 179.9L306.7 183L303.6 186.1Z" fill="#008000"/>
<path d="M307.0 177.9L310.1 174.8L313.2 177.9L310.1 181.0Z" fill="#008000"/>
<path d="M309.5 185.3L312.6 182.2L315.7 185.3L312.6 188.4Z" fill="#008000"/>
<path d="M317.3 188.8L320.4 185.7L323.5 188.8L320.4 191.9Z" fill="#008000"/>
<path d="M312.4 195.1L315.5 192.0L318.6 195.1L315.5 198.2Z" fill="#008000"/>
<path d="M332.2 196.3L335.3 193.2L338.4 196.3L335.3 199.4Z" fill="#008000"/>
<path d="M265.5 201.6L268.6 198.5L271.7 201.6L268.6 204.7Z" fill="#008000"/>
<path d="M267.3 199.8L270.4 196.7L273.5 199.8L270.4 202.9Z" fill="#008000"/>
<path d="M268.9 198.2L272 195.1L275.1 198.2L272 201.3Z" fill="#008000"/>
<path d="M301.7 204L304.8 200.9L307.9 204L304.8 207.1Z" fill="#008000"/>
<path d="M303.3 202L306.4 198.9L309.5 202L306.4 205.1Z" fill="#008000"/>
<path d="M304.9 200L308 196.9L311.1 200L308 203.1Z" fill="#008000"/>
<path d="M313.8 206.4L316.9 203.3L320.0 206.4L316.9 209.5Z" fill="#008000"/>
<path d="M263.7 238.9L266.8 235.8L269.9 238.9L266.8 242.0Z" fill="#008000"/>
<path d="M261.6 268.5L264.7 265.4L267.8 268.5L264.7 271.6Z" fill="#008000"/>
<path d="M259.1 335.5L262.2 332.4L265.3 335.5L262.2 338.6Z" fill="#008000"/>
<path d="M958.2 310.5L961.3 307.4L964.4 310.5L961.3 313.6Z" fill="#008000"/>
<path d="M1014.2 279.4L1017.3 276.3L1020.4 279.4L1017.3 282.5Z" fill="#008000"/>
<path d="M918.0 279.4L921.2 276.2L924.4 279.4L921.2 282.6Z" fill="#000"/>
<path d="M943.2 310.5L946.4 307.3L949.6 310.5L946.4 313.7Z" fill="#000"/>
<path d="M945.9 321.9L949.1 318.7L952.3 321.9L949.1 325.1Z" fill="#000"/>
<path d="M915.6 328.1L918.8 324.9L922.0 328.1L918.8 331.3Z" fill="#000"/>
<path d="M864.7 336.8L867.9 333.6L871.1 336.8L867.9 340.0Z" fill="#000"/>
<path d="M862.0 345.7L865.2 342.5L868.4 345.7L865.2 348.9Z" fill="#000"/>
<path d="M911.5 360.6L914.7 357.4L917.9 360.6L914.7 363.8Z" fill="#000"/>
<path d="M948.0 375.3L951.2 372.1L954.4 375.3L951.2 378.5Z" fill="#000"/>
<path d="M839.4 496.8L842 494L844.6 496.8Z M842.4 496.8L845 494L847.6 496.8Z M845.4 496.8L848 494L850.6 496.8Z M848.4 496.8L851 494L853.6 496.8Z M851.4 496.8L854 494L856.6 496.8Z M854.4 496.8L857 494L859.6 496.8Z M857.4 496.8L860 494L862.6 496.8Z M863.4 496.8L866 494L868.6 496.8Z M866.4 496.8L869 494L871.6 496.8Z M869.4 496.8L872 494L874.6 496.8Z M872.4 496.8L875 494L877.6 496.8Z M875.4 496.8L878 494L880.6 496.8Z M878.4 496.8L881 494L883.6 496.8Z M881.4 496.8L884 494L886.6 496.8Z M884.4 496.8L887 494L889.6 496.8Z M887.4 496.8L890 494L892.6 496.8Z M890.4 496.8L893 494L895.6 496.8Z M893.4 496.8L896 494L898.6 496.8Z M896.4 496.8L899 494L901.6 496.8Z M899.4 496.8L902 494L904.6 496.8Z M902.4 496.8L905 494L907.6 496.8Z M905.4 496.8L908 494L910.6 496.8Z M908.4 496.8L911 494L913.6 496.8Z M914.4 496.8L917 494L919.6 496.8Z M917.4 496.8L920 494L922.6 496.8Z M920.4 496.8L923 494L925.6 496.8Z M923.4 496.8L926 494L928.6 496.8Z M926.4 496.8L929 494L931.6 496.8Z M929.4 496.8L932 494L934.6 496.8Z M932.4 496.8L935 494L937.6 496.8Z M935.4 496.8L938 494L940.6 496.8Z M938.4 496.8L941 494L943.6 496.8Z M941.4 496.8L944 494L946.6 496.8Z M947.4 496.8L950 494L952.6 496.8Z M950.4 496.8L953 494L955.6 496.8Z M953.4 496.8L956 494L958.6 496.8Z" fill="#000"/>
<path d="M955.4 496.8L958 494L960.6 496.8Z M958.4 496.8L961 494L963.6 496.8Z M961.4 496.8L964 494L966.6 496.8Z M964.4 496.8L967 494L969.6 496.8Z M967.4 496.8L970 494L972.6 496.8Z M970.4 496.8L973 494L975.6 496.8Z M973.4 496.8L976 494L978.6 496.8Z M976.4 496.8L979 494L981.6 496.8Z M979.4 496.8L982 494L984.6 496.8Z M982.4 496.8L985 494L987.6 496.8Z M985.4 496.8L988 494L990.6 496.8Z M988.4 496.8L991 494L993.6 496.8Z M991.4 496.8L994 494L996.6 496.8Z M994.4 496.8L997 494L999.6 496.8Z M997.4 496.8L1000 494L1002.6 496.8Z M1000.4 496.8L1003 494L1005.6 496.8Z M1003.4 496.8L1006 494L1008.6 496.8Z M1006.4 496.8L1009 494L1011.6 496.8Z M1009.4 496.8L1012 494L1014.6 496.8Z M1012.4 496.8L1015 494L1017.6 496.8Z" fill="#008000"/>
<rect x="839" y="496.7" width="182" height="2.2" fill="#e00000"/>
<rect x="1012" y="497.4" width="10" height="1.6" fill="#000"/>
<rect x="1051.6" y="155.8" width="60.8" height="83" fill="#000"/>
<rect x="1047.2" y="151.4" width="60.8" height="83" fill="url(#lg)" stroke="#000" stroke-width="1"/>
<text x="1060.4" y="165.9" font-family="Liberation Sans, sans-serif" font-size="14.8" fill="#ffff00" textLength="13" lengthAdjust="spacingAndGlyphs">Fit</text>
<text x="1060.4" y="182" font-family="Liberation Sans, sans-serif" font-size="14.8" fill="#000" textLength="27.8" lengthAdjust="spacingAndGlyphs">Data</text>
<text x="1060.4" y="198.2" font-family="Liberation Sans, sans-serif" font-size="14.8" fill="#ff0000" textLength="26.5" lengthAdjust="spacingAndGlyphs">K-40</text>
<text x="1060.4" y="214.4" font-family="Liberation Sans, sans-serif" font-size="14.8" fill="#008000" textLength="35.6" lengthAdjust="spacingAndGlyphs">U-238</text>
<text x="1060.4" y="230.6" font-family="Liberation Sans, sans-serif" font-size="14.8" fill="#0000ff" textLength="41.4" lengthAdjust="spacingAndGlyphs">Th-232</text>
</svg>
<div style="left:17.3px;top:579.2px;width:75px;height:29.4px;background:linear-gradient(#f6f9fe,#e4edfa 60%,#dbe7f8);border:1.5px solid #d8a3b4;border-bottom:none;border-radius:4px 4px 0 0;"></div>
<div style="left:92.3px;top:582px;width:1.6px;height:25px;background:#3b5fb5;"></div>
<span class=t style='left:24.60px;top:587.60px;font:400 13px "DejaVu Sans Condensed", "DejaVu Sans", "Liberation Sans", sans-serif;color:#15253f;letter-spacing:0.420px;'>Raw data</span>
<span class=t style='left:104.80px;top:587.60px;font:400 13px "DejaVu Sans Condensed", "DejaVu Sans", "Liberation Sans", sans-serif;color:#15253f;letter-spacing:0.304px;'>Scrapbook</span>
<div style="left:16px;top:608.8px;width:1126px;height:209.4px;background:#fff;border:1px solid #9fb6da;box-shadow:0 0 0 2.4px #c4d8f6;border-radius:1px;"></div>
<div style="left:16.6px;top:609.6px;width:99.95px;height:22.92px;background:linear-gradient(#f4f8fd,#dfe9f7 45%,#d3e1f3 55%,#e2ebf8);border-right:1px solid #c5d3e8;border-bottom:1px solid #c5d3e8;"></div>
<span class=t style='left:21.20px;top:616.90px;font:700 13px "DejaVu Sans Condensed", "DejaVu Sans", "Liberation Sans", sans-serif;color:#000;letter-spacing:0.324px;'>Spectrum No</span>
<div style="left:116.55000000000001px;top:609.6px;width:99.95px;height:22.92px;background:linear-gradient(#f4f8fd,#dfe9f7 45%,#d3e1f3 55%,#e2ebf8);border-right:1px solid #c5d3e8;border-bottom:1px solid #c5d3e8;"></div>
<span class=t style='left:121.15px;top:616.90px;font:700 13px "DejaVu Sans Condensed", "DejaVu Sans", "Liberation Sans", sans-serif;color:#000;letter-spacing:0.428px;'>Live  time  S</span>
<div style="left:216.5px;top:609.6px;width:99.95px;height:22.92px;background:linear-gradient(#f4f8fd,#dfe9f7 45%,#d3e1f3 55%,#e2ebf8);border-right:1px solid #c5d3e8;border-bottom:1px solid #c5d3e8;"></div>
<span class=t style='left:221.10px;top:616.90px;font:700 13px "DejaVu Sans Condensed", "DejaVu Sans", "Liberation Sans", sans-serif;color:#000;letter-spacing:0.472px;'>Cosmics  SP</span>
<div style="left:316.45000000000005px;top:609.6px;width:99.95px;height:22.92px;background:linear-gradient(#f4f8fd,#dfe9f7 45%,#d3e1f3 55%,#e2ebf8);border-right:1px solid #c5d3e8;border-bottom:1px solid #c5d3e8;"></div>
<span class=t style='left:321.05px;top:616.90px;font:700 13px "DejaVu Sans Condensed", "DejaVu Sans", "Liberation Sans", sans-serif;color:#000;letter-spacing:0.655px;'>Total  count</span>
<div style="left:416.40000000000003px;top:609.6px;width:99.95px;height:22.92px;background:linear-gradient(#f4f8fd,#dfe9f7 45%,#d3e1f3 55%,#e2ebf8);border-right:1px solid #c5d3e8;border-bottom:1px solid #c5d3e8;"></div>
<span class=t style='left:421.00px;top:616.90px;font:700 13px "DejaVu Sans Condensed", "DejaVu Sans", "Liberation Sans", sans-serif;color:#000;letter-spacing:0.436px;'>Count  rate</span>
<div style="left:516.35px;top:609.6px;width:99.95px;height:22.92px;background:linear-gradient(#f4f8fd,#dfe9f7 45%,#d3e1f3 55%,#e2ebf8);border-right:1px solid #c5d3e8;border-bottom:1px solid #c5d3e8;"></div>
<span class=t style='left:520.95px;top:616.90px;font:700 13px "DejaVu Sans Condensed", "DejaVu Sans", "Liberation Sans", sans-serif;color:#000;letter-spacing:0.456px;'>P  (hPa)  PT</span>
<div style="left:616.3000000000001px;top:609.6px;width:99.95px;height:22.92px;background:linear-gradient(#f4f8fd,#dfe9f7 45%,#d3e1f3 55%,#e2ebf8);border-right:1px solid #c5d3e8;border-bottom:1px solid #c5d3e8;"></div>
<span class=t style='left:620.90px;top:616.90px;font:700 13px "DejaVu Sans Condensed", "DejaVu Sans", "Liberation Sans", sans-serif;color:#000;letter-spacing:0.466px;'>T  (C)  PTH</span>
<div style="left:716.25px;top:609.6px;width:99.95px;height:22.92px;background:linear-gradient(#f4f8fd,#dfe9f7 45%,#d3e1f3 55%,#e2ebf8);border-right:1px solid #c5d3e8;border-bottom:1px solid #c5d3e8;"></div>
<span class=t style='left:720.85px;top:616.90px;font:700 13px "DejaVu Sans Condensed", "DejaVu Sans", "Liberation Sans", sans-serif;color:#000;letter-spacing:0.881px;'>H  (%)  PTH</span>
<div style="left:816.2px;top:609.6px;width:99.95px;height:22.92px;background:linear-gradient(#f4f8fd,#dfe9f7 45%,#d3e1f3 55%,#e2ebf8);border-right:1px solid #c5d3e8;border-bottom:1px solid #c5d3e8;"></div>
<span class=t style='left:820.80px;top:616.90px;font:700 13px "DejaVu Sans Condensed", "DejaVu Sans", "Liberation Sans", sans-serif;color:#000;letter-spacing:0.305px;'>Stab</span>
<div style="left:916.1500000000001px;top:609.6px;width:99.95px;height:22.92px;background:linear-gradient(#f4f8fd,#dfe9f7 45%,#d3e1f3 55%,#e2ebf8);border-right:1px solid #c5d3e8;border-bottom:1px solid #c5d3e8;"></div>
<span class=t style='left:920.75px;top:616.90px;font:700 13px "DejaVu Sans Condensed", "DejaVu Sans", "Liberation Sans", sans-serif;color:#000;letter-spacing:0.355px;'>Aux  longitu</span>
<div style="left:1016.1px;top:609.6px;width:99.95px;height:22.92px;background:linear-gradient(#f4f8fd,#dfe9f7 45%,#d3e1f3 55%,#e2ebf8);border-right:1px solid #c5d3e8;border-bottom:1px solid #c5d3e8;"></div>
<span class=t style='left:1020.70px;top:616.90px;font:700 13px "DejaVu Sans Condensed", "DejaVu Sans", "Liberation Sans", sans-serif;color:#000;letter-spacing:0.440px;'>Aux  latitude</span>
<div style="left:16.6px;top:632.52px;width:99.95px;height:22.62px;background:linear-gradient(#eef3fb,#dfe9f6 45%,#d6e3f3 55%,#e6eef9);border-right:1px solid #c5d3e8;border-bottom:1px solid #c9d6ea;"></div>
<div style="left:116.55000000000001px;top:632.52px;width:99.95px;height:22.62px;border-right:1px solid #e6e6ec;border-bottom:1px solid #e6e6ec;"></div>
<div style="left:216.5px;top:632.52px;width:99.95px;height:22.62px;border-right:1px solid #e6e6ec;border-bottom:1px solid #e6e6ec;"></div>
<div style="left:316.45000000000005px;top:632.52px;width:99.95px;height:22.62px;border-right:1px solid #e6e6ec;border-bottom:1px solid #e6e6ec;"></div>
<div style="left:416.40000000000003px;top:632.52px;width:99.95px;height:22.62px;border-right:1px solid #e6e6ec;border-bottom:1px solid #e6e6ec;"></div>
<div style="left:516.35px;top:632.52px;width:99.95px;height:22.62px;border-right:1px solid #e6e6ec;border-bottom:1px solid #e6e6ec;"></div>
<div style="left:616.3000000000001px;top:632.52px;width:99.95px;height:22.62px;border-right:1px solid #e6e6ec;border-bottom:1px solid #e6e6ec;"></div>
<div style="left:716.25px;top:632.52px;width:99.95px;height:22.62px;border-right:1px solid #e6e6ec;border-bottom:1px solid #e6e6ec;"></div>
<div style="left:816.2px;top:632.52px;width:99.95px;height:22.62px;border-right:1px solid #e6e6ec;border-bottom:1px solid #e6e6ec;"></div>
<div style="left:916.1500000000001px;top:632.52px;width:99.95px;height:22.62px;border-right:1px solid #e6e6ec;border-bottom:1px solid #e6e6ec;"></div>
<div style="left:1016.1px;top:632.52px;width:99.95px;height:22.62px;border-right:1px solid #e6e6ec;border-bottom:1px solid #e6e6ec;"></div>
<span class=t style='left:21.60px;top:638.62px;font:700 13px "DejaVu Sans Condensed", "DejaVu Sans", "Liberation Sans", sans-serif;color:#000;'>0</span>
<span class=t style='left:121.15px;top:638.62px;font:400 13px "DejaVu Sans Condensed", "DejaVu Sans", "Liberation Sans", sans-serif;color:#000;letter-spacing:0.025px;'>0.996000</span>
<span class=t style='left:221.10px;top:638.62px;font:400 13px "DejaVu Sans Condensed", "DejaVu Sans", "Liberation Sans", sans-serif;color:#000;letter-spacing:0.025px;'>2.000000</span>
<span class=t style='left:321.05px;top:638.62px;font:400 13px "DejaVu Sans Condensed", "DejaVu Sans", "Liberation Sans", sans-serif;color:#000;letter-spacing:-0.007px;'>736.000000</span>
<span class=t style='left:421.00px;top:638.62px;font:400 13px "DejaVu Sans Condensed", "DejaVu Sans", "Liberation Sans", sans-serif;color:#000;letter-spacing:-0.007px;'>738.955811</span>
<span class=t style='left:520.95px;top:638.62px;font:400 13px "DejaVu Sans Condensed", "DejaVu Sans", "Liberation Sans", sans-serif;color:#000;letter-spacing:-0.007px;'>987.980000</span>
<span class=t style='left:620.90px;top:638.62px;font:400 13px "DejaVu Sans Condensed", "DejaVu Sans", "Liberation Sans", sans-serif;color:#000;letter-spacing:0.007px;'>30.850000</span>
<span class=t style='left:720.85px;top:638.62px;font:400 13px "DejaVu Sans Condensed", "DejaVu Sans", "Liberation Sans", sans-serif;color:#000;letter-spacing:0.025px;'>0.000000</span>
<span class=t style='left:820.80px;top:638.62px;font:400 13px "DejaVu Sans Condensed", "DejaVu Sans", "Liberation Sans", sans-serif;color:#000;letter-spacing:0.025px;'>0.681403</span>
<span class=t style='left:920.75px;top:638.62px;font:400 13px "DejaVu Sans Condensed", "DejaVu Sans", "Liberation Sans", sans-serif;color:#000;'>-1.000000</span>
<span class=t style='left:1020.70px;top:638.62px;font:400 13px "DejaVu Sans Condensed", "DejaVu Sans", "Liberation Sans", sans-serif;color:#000;'>-1.000000</span>
<div style="left:16.6px;top:655.14px;width:99.95px;height:22.62px;background:linear-gradient(#eef3fb,#dfe9f6 45%,#d6e3f3 55%,#e6eef9);border-right:1px solid #c5d3e8;border-bottom:1px solid #c9d6ea;"></div>
<div style="left:116.55000000000001px;top:655.14px;width:99.95px;height:22.62px;border-right:1px solid #e6e6ec;border-bottom:1px solid #e6e6ec;"></div>
<div style="left:216.5px;top:655.14px;width:99.95px;height:22.62px;border-right:1px solid #e6e6ec;border-bottom:1px solid #e6e6ec;"></div>
<div style="left:316.45000000000005px;top:655.14px;width:99.95px;height:22.62px;border-right:1px solid #e6e6ec;border-bottom:1px solid #e6e6ec;"></div>
<div style="left:416.40000000000003px;top:655.14px;width:99.95px;height:22.62px;border-right:1px solid #e6e6ec;border-bottom:1px solid #e6e6ec;"></div>
<div style="left:516.35px;top:655.14px;width:99.95px;height:22.62px;border-right:1px solid #e6e6ec;border-bottom:1px solid #e6e6ec;"></div>
<div style="left:616.3000000000001px;top:655.14px;width:99.95px;height:22.62px;border-right:1px solid #e6e6ec;border-bottom:1px solid #e6e6ec;"></div>
<div style="left:716.25px;top:655.14px;width:99.95px;height:22.62px;border-right:1px solid #e6e6ec;border-bottom:1px solid #e6e6ec;"></div>
<div style="left:816.2px;top:655.14px;width:99.95px;height:22.62px;border-right:1px solid #e6e6ec;border-bottom:1px solid #e6e6ec;"></div>
<div style="left:916.1500000000001px;top:655.14px;width:99.95px;height:22.62px;border-right:1px solid #e6e6ec;border-bottom:1px solid #e6e6ec;"></div>
<div style="left:1016.1px;top:655.14px;width:99.95px;height:22.62px;border-right:1px solid #e6e6ec;border-bottom:1px solid #e6e6ec;"></div>
<span class=t style='left:21.60px;top:661.24px;font:700 13px "DejaVu Sans Condensed", "DejaVu Sans", "Liberation Sans", sans-serif;color:#000;'>1</span>
<span class=t style='left:121.15px;top:661.24px;font:400 13px "DejaVu Sans Condensed", "DejaVu Sans", "Liberation Sans", sans-serif;color:#000;letter-spacing:0.025px;'>0.997000</span>
<span class=t style='left:221.10px;top:661.24px;font:400 13px "DejaVu Sans Condensed", "DejaVu Sans", "Liberation Sans", sans-serif;color:#000;letter-spacing:0.025px;'>5.000000</span>
<span class=t style='left:321.05px;top:661.24px;font:400 13px "DejaVu Sans Condensed", "DejaVu Sans", "Liberation Sans", sans-serif;color:#000;letter-spacing:-0.007px;'>733.000000</span>
<span class=t style='left:421.00px;top:661.24px;font:400 13px "DejaVu Sans Condensed", "DejaVu Sans", "Liberation Sans", sans-serif;color:#000;letter-spacing:-0.007px;'>735.205627</span>
<span class=t style='left:520.95px;top:661.24px;font:400 13px "DejaVu Sans Condensed", "DejaVu Sans", "Liberation Sans", sans-serif;color:#000;letter-spacing:-0.007px;'>988.110000</span>
<span class=t style='left:620.90px;top:661.24px;font:400 13px "DejaVu Sans Condensed", "DejaVu Sans", "Liberation Sans", sans-serif;color:#000;letter-spacing:0.007px;'>30.880000</span>
<span class=t style='left:720.85px;top:661.24px;font:400 13px "DejaVu Sans Condensed", "DejaVu Sans", "Liberation Sans", sans-serif;color:#000;letter-spacing:0.025px;'>0.000000</span>
<span class=t style='left:820.80px;top:661.24px;font:400 13px "DejaVu Sans Condensed", "DejaVu Sans", "Liberation Sans", sans-serif;color:#000;letter-spacing:0.025px;'>0.681403</span>
<span class=t style='left:920.75px;top:661.24px;font:400 13px "DejaVu Sans Condensed", "DejaVu Sans", "Liberation Sans", sans-serif;color:#000;letter-spacing:0.007px;'>13.127729</span>
<span class=t style='left:1020.70px;top:661.24px;font:400 13px "DejaVu Sans Condensed", "DejaVu Sans", "Liberation Sans", sans-serif;color:#000;letter-spacing:0.007px;'>58.249028</span>
<div style="left:16.6px;top:677.76px;width:99.95px;height:22.62px;background:linear-gradient(#eef3fb,#dfe9f6 45%,#d6e3f3 55%,#e6eef9);border-right:1px solid #c5d3e8;border-bottom:1px solid #c9d6ea;"></div>
<div style="left:116.55000000000001px;top:677.76px;width:99.95px;height:22.62px;border-right:1px solid #e6e6ec;border-bottom:1px solid #e6e6ec;"></div>
<div style="left:216.5px;top:677.76px;width:99.95px;height:22.62px;border-right:1px solid #e6e6ec;border-bottom:1px solid #e6e6ec;"></div>
<div style="left:316.45000000000005px;top:677.76px;width:99.95px;height:22.62px;border-right:1px solid #e6e6ec;border-bottom:1px solid #e6e6ec;"></div>
<div style="left:416.40000000000003px;top:677.76px;width:99.95px;height:22.62px;border-right:1px solid #e6e6ec;border-bottom:1px solid #e6e6ec;"></div>
<div style="left:516.35px;top:677.76px;width:99.95px;height:22.62px;border-right:1px solid #e6e6ec;border-bottom:1px solid #e6e6ec;"></div>
<div style="left:616.3000000000001px;top:677.76px;width:99.95px;height:22.62px;border-right:1px solid #e6e6ec;border-bottom:1px solid #e6e6ec;"></div>
<div style="left:716.25px;top:677.76px;width:99.95px;height:22.62px;border-right:1px solid #e6e6ec;border-bottom:1px solid #e6e6ec;"></div>
<div style="left:816.2px;top:677.76px;width:99.95px;height:22.62px;border-right:1px solid #e6e6ec;border-bottom:1px solid #e6e6ec;"></div>
<div style="left:916.1500000000001px;top:677.76px;width:99.95px;height:22.62px;border-right:1px solid #e6e6ec;border-bottom:1px solid #e6e6ec;"></div>
<div style="left:1016.1px;top:677.76px;width:99.95px;height:22.62px;border-right:1px solid #e6e6ec;border-bottom:1px solid #e6e6ec;"></div>
<span class=t style='left:21.60px;top:683.86px;font:700 13px "DejaVu Sans Condensed", "DejaVu Sans", "Liberation Sans", sans-serif;color:#000;'>2</span>
<span class=t style='left:121.15px;top:683.86px;font:400 13px "DejaVu Sans Condensed", "DejaVu Sans", "Liberation Sans", sans-serif;color:#000;letter-spacing:0.025px;'>0.997000</span>
<span class=t style='left:221.10px;top:683.86px;font:400 13px "DejaVu Sans Condensed", "DejaVu Sans", "Liberation Sans", sans-serif;color:#000;letter-spacing:0.025px;'>0.000000</span>
<span class=t style='left:321.05px;top:683.86px;font:400 13px "DejaVu Sans Condensed", "DejaVu Sans", "Liberation Sans", sans-serif;color:#000;letter-spacing:-0.007px;'>661.000000</span>
<span class=t style='left:421.00px;top:683.86px;font:400 13px "DejaVu Sans Condensed", "DejaVu Sans", "Liberation Sans", sans-serif;color:#000;letter-spacing:-0.007px;'>662.988953</span>
<span class=t style='left:520.95px;top:683.86px;font:400 13px "DejaVu Sans Condensed", "DejaVu Sans", "Liberation Sans", sans-serif;color:#000;letter-spacing:-0.007px;'>988.080000</span>
<span class=t style='left:620.90px;top:683.86px;font:400 13px "DejaVu Sans Condensed", "DejaVu Sans", "Liberation Sans", sans-serif;color:#000;letter-spacing:0.007px;'>30.870000</span>
<span class=t style='left:720.85px;top:683.86px;font:400 13px "DejaVu Sans Condensed", "DejaVu Sans", "Liberation Sans", sans-serif;color:#000;letter-spacing:0.025px;'>0.000000</span>
<span class=t style='left:820.80px;top:683.86px;font:400 13px "DejaVu Sans Condensed", "DejaVu Sans", "Liberation Sans", sans-serif;color:#000;letter-spacing:0.025px;'>0.681403</span>
<span class=t style='left:920.75px;top:683.86px;font:400 13px "DejaVu Sans Condensed", "DejaVu Sans", "Liberation Sans", sans-serif;color:#000;letter-spacing:0.007px;'>13.127718</span>
<span class=t style='left:1020.70px;top:683.86px;font:400 13px "DejaVu Sans Condensed", "DejaVu Sans", "Liberation Sans", sans-serif;color:#000;letter-spacing:0.007px;'>58.249028</span>
<div style="left:16.6px;top:700.38px;width:99.95px;height:22.62px;background:linear-gradient(#eef3fb,#dfe9f6 45%,#d6e3f3 55%,#e6eef9);border-right:1px solid #c5d3e8;border-bottom:1px solid #c9d6ea;"></div>
<div style="left:116.55000000000001px;top:700.38px;width:99.95px;height:22.62px;border-right:1px solid #e6e6ec;border-bottom:1px solid #e6e6ec;"></div>
<div style="left:216.5px;top:700.38px;width:99.95px;height:22.62px;border-right:1px solid #e6e6ec;border-bottom:1px solid #e6e6ec;"></div>
<div style="left:316.45000000000005px;top:700.38px;width:99.95px;height:22.62px;border-right:1px solid #e6e6ec;border-bottom:1px solid #e6e6ec;"></div>
<div style="left:416.40000000000003px;top:700.38px;width:99.95px;height:22.62px;border-right:1px solid #e6e6ec;border-bottom:1px solid #e6e6ec;"></div>
<div style="left:516.35px;top:700.38px;width:99.95px;height:22.62px;border-right:1px solid #e6e6ec;border-bottom:1px solid #e6e6ec;"></div>
<div style="left:616.3000000000001px;top:700.38px;width:99.95px;height:22.62px;border-right:1px solid #e6e6ec;border-bottom:1px solid #e6e6ec;"></div>
<div style="left:716.25px;top:700.38px;width:99.95px;height:22.62px;border-right:1px solid #e6e6ec;border-bottom:1px solid #e6e6ec;"></div>
<div style="left:816.2px;top:700.38px;width:99.95px;height:22.62px;border-right:1px solid #e6e6ec;border-bottom:1px solid #e6e6ec;"></div>
<div style="left:916.1500000000001px;top:700.38px;width:99.95px;height:22.62px;border-right:1px solid #e6e6ec;border-bottom:1px solid #e6e6ec;"></div>
<div style="left:1016.1px;top:700.38px;width:99.95px;height:22.62px;border-right:1px solid #e6e6ec;border-bottom:1px solid #e6e6ec;"></div>
<span class=t style='left:21.60px;top:706.48px;font:700 13px "DejaVu Sans Condensed", "DejaVu Sans", "Liberation Sans", sans-serif;color:#000;'>3</span>
<span class=t style='left:121.15px;top:706.48px;font:400 13px "DejaVu Sans Condensed", "DejaVu Sans", "Liberation Sans", sans-serif;color:#000;letter-spacing:0.025px;'>0.996000</span>
<span class=t style='left:221.10px;top:706.48px;font:400 13px "DejaVu Sans Condensed", "DejaVu Sans", "Liberation Sans", sans-serif;color:#000;letter-spacing:0.025px;'>2.000000</span>
<span class=t style='left:321.05px;top:706.48px;font:400 13px "DejaVu Sans Condensed", "DejaVu Sans", "Liberation Sans", sans-serif;color:#000;letter-spacing:-0.007px;'>690.000000</span>
<span class=t style='left:421.00px;top:706.48px;font:400 13px "DejaVu Sans Condensed", "DejaVu Sans", "Liberation Sans", sans-serif;color:#000;letter-spacing:-0.007px;'>692.771118</span>
<span class=t style='left:520.95px;top:706.48px;font:400 13px "DejaVu Sans Condensed", "DejaVu Sans", "Liberation Sans", sans-serif;color:#000;letter-spacing:-0.007px;'>988.300000</span>
<span class=t style='left:620.90px;top:706.48px;font:400 13px "DejaVu Sans Condensed", "DejaVu Sans", "Liberation Sans", sans-serif;color:#000;letter-spacing:0.007px;'>30.870000</span>
<span class=t style='left:720.85px;top:706.48px;font:400 13px "DejaVu Sans Condensed", "DejaVu Sans", "Liberation Sans", sans-serif;color:#000;letter-spacing:0.025px;'>0.000000</span>
<span class=t style='left:820.80px;top:706.48px;font:400 13px "DejaVu Sans Condensed", "DejaVu Sans", "Liberation Sans", sans-serif;color:#000;letter-spacing:0.025px;'>0.681403</span>
<span class=t style='left:920.75px;top:706.48px;font:400 13px "DejaVu Sans Condensed", "DejaVu Sans", "Liberation Sans", sans-serif;color:#000;letter-spacing:0.007px;'>13.127704</span>
<span class=t style='left:1020.70px;top:706.48px;font:400 13px "DejaVu Sans Condensed", "DejaVu Sans", "Liberation Sans", sans-serif;color:#000;letter-spacing:0.007px;'>58.249034</span>
<div style="left:16.6px;top:723.0px;width:99.95px;height:22.62px;background:linear-gradient(#eef3fb,#dfe9f6 45%,#d6e3f3 55%,#e6eef9);border-right:1px solid #c5d3e8;border-bottom:1px solid #c9d6ea;"></div>
<div style="left:116.55000000000001px;top:723.0px;width:99.95px;height:22.62px;border-right:1px solid #e6e6ec;border-bottom:1px solid #e6e6ec;"></div>
<div style="left:216.5px;top:723.0px;width:99.95px;height:22.62px;border-right:1px solid #e6e6ec;border-bottom:1px solid #e6e6ec;"></div>
<div style="left:316.45000000000005px;top:723.0px;width:99.95px;height:22.62px;border-right:1px solid #e6e6ec;border-bottom:1px solid #e6e6ec;"></div>
<div style="left:416.40000000000003px;top:723.0px;width:99.95px;height:22.62px;border-right:1px solid #e6e6ec;border-bottom:1px solid #e6e6ec;"></div>
<div style="left:516.35px;top:723.0px;width:99.95px;height:22.62px;border-right:1px solid #e6e6ec;border-bottom:1px solid #e6e6ec;"></div>
<div style="left:616.3000000000001px;top:723.0px;width:99.95px;height:22.62px;border-right:1px solid #e6e6ec;border-bottom:1px solid #e6e6ec;"></div>
<div style="left:716.25px;top:723.0px;width:99.95px;height:22.62px;border-right:1px solid #e6e6ec;border-bottom:1px solid #e6e6ec;"></div>
<div style="left:816.2px;top:723.0px;width:99.95px;height:22.62px;border-right:1px solid #e6e6ec;border-bottom:1px solid #e6e6ec;"></div>
<div style="left:916.1500000000001px;top:723.0px;width:99.95px;height:22.62px;border-right:1px solid #e6e6ec;border-bottom:1px solid #e6e6ec;"></div>
<div style="left:1016.1px;top:723.0px;width:99.95px;height:22.62px;border-right:1px solid #e6e6ec;border-bottom:1px solid #e6e6ec;"></div>
<span class=t style='left:21.60px;top:729.10px;font:700 13px "DejaVu Sans Condensed", "DejaVu Sans", "Liberation Sans", sans-serif;color:#000;'>4</span>
<span class=t style='left:121.15px;top:729.10px;font:400 13px "DejaVu Sans Condensed", "DejaVu Sans", "Liberation Sans", sans-serif;color:#000;letter-spacing:0.025px;'>0.996000</span>
<span class=t style='left:221.10px;top:729.10px;font:400 13px "DejaVu Sans Condensed", "DejaVu Sans", "Liberation Sans", sans-serif;color:#000;letter-spacing:0.025px;'>0.000000</span>
<span class=t style='left:321.05px;top:729.10px;font:400 13px "DejaVu Sans Condensed", "DejaVu Sans", "Liberation Sans", sans-serif;color:#000;letter-spacing:-0.007px;'>706.000000</span>
<span class=t style='left:421.00px;top:729.10px;font:400 13px "DejaVu Sans Condensed", "DejaVu Sans", "Liberation Sans", sans-serif;color:#000;letter-spacing:-0.007px;'>708.835327</span>
<span class=t style='left:520.95px;top:729.10px;font:400 13px "DejaVu Sans Condensed", "DejaVu Sans", "Liberation Sans", sans-serif;color:#000;letter-spacing:-0.007px;'>988.240000</span>
<span class=t style='left:620.90px;top:729.10px;font:400 13px "DejaVu Sans Condensed", "DejaVu Sans", "Liberation Sans", sans-serif;color:#000;letter-spacing:0.007px;'>30.880000</span>
<span class=t style='left:720.85px;top:729.10px;font:400 13px "DejaVu Sans Condensed", "DejaVu Sans", "Liberation Sans", sans-serif;color:#000;letter-spacing:0.025px;'>0.000000</span>
<span class=t style='left:820.80px;top:729.10px;font:400 13px "DejaVu Sans Condensed", "DejaVu Sans", "Liberation Sans", sans-serif;color:#000;letter-spacing:0.025px;'>0.681403</span>
<span class=t style='left:920.75px;top:729.10px;font:400 13px "DejaVu Sans Condensed", "DejaVu Sans", "Liberation Sans", sans-serif;color:#000;letter-spacing:0.007px;'>13.127690</span>
<span class=t style='left:1020.70px;top:729.10px;font:400 13px "DejaVu Sans Condensed", "DejaVu Sans", "Liberation Sans", sans-serif;color:#000;letter-spacing:0.007px;'>58.249033</span>
<div style="left:16.6px;top:745.62px;width:99.95px;height:22.62px;background:linear-gradient(#eef3fb,#dfe9f6 45%,#d6e3f3 55%,#e6eef9);border-right:1px solid #c5d3e8;border-bottom:1px solid #c9d6ea;"></div>
<div style="left:116.55000000000001px;top:745.62px;width:99.95px;height:22.62px;border-right:1px solid #e6e6ec;border-bottom:1px solid #e6e6ec;"></div>
<div style="left:216.5px;top:745.62px;width:99.95px;height:22.62px;border-right:1px solid #e6e6ec;border-bottom:1px solid #e6e6ec;"></div>
<div style="left:316.45000000000005px;top:745.62px;width:99.95px;height:22.62px;border-right:1px solid #e6e6ec;border-bottom:1px solid #e6e6ec;"></div>
<div style="left:416.40000000000003px;top:745.62px;width:99.95px;height:22.62px;border-right:1px solid #e6e6ec;border-bottom:1px solid #e6e6ec;"></div>
<div style="left:516.35px;top:745.62px;width:99.95px;height:22.62px;border-right:1px solid #e6e6ec;border-bottom:1px solid #e6e6ec;"></div>
<div style="left:616.3000000000001px;top:745.62px;width:99.95px;height:22.62px;border-right:1px solid #e6e6ec;border-bottom:1px solid #e6e6ec;"></div>
<div style="left:716.25px;top:745.62px;width:99.95px;height:22.62px;border-right:1px solid #e6e6ec;border-bottom:1px solid #e6e6ec;"></div>
<div style="left:816.2px;top:745.62px;width:99.95px;height:22.62px;border-right:1px solid #e6e6ec;border-bottom:1px solid #e6e6ec;"></div>
<div style="left:916.1500000000001px;top:745.62px;width:99.95px;height:22.62px;border-right:1px solid #e6e6ec;border-bottom:1px solid #e6e6ec;"></div>
<div style="left:1016.1px;top:745.62px;width:99.95px;height:22.62px;border-right:1px solid #e6e6ec;border-bottom:1px solid #e6e6ec;"></div>
<span class=t style='left:21.60px;top:751.72px;font:700 13px "DejaVu Sans Condensed", "DejaVu Sans", "Liberation Sans", sans-serif;color:#000;'>5</span>
<span class=t style='left:121.15px;top:751.72px;font:400 13px "DejaVu Sans Condensed", "DejaVu Sans", "Liberation Sans", sans-serif;color:#000;letter-spacing:0.025px;'>0.997000</span>
<span class=t style='left:221.10px;top:751.72px;font:400 13px "DejaVu Sans Condensed", "DejaVu Sans", "Liberation Sans", sans-serif;color:#000;letter-spacing:0.025px;'>2.000000</span>
<span class=t style='left:321.05px;top:751.72px;font:400 13px "DejaVu Sans Condensed", "DejaVu Sans", "Liberation Sans", sans-serif;color:#000;letter-spacing:-0.007px;'>726.000000</span>
<span class=t style='left:421.00px;top:751.72px;font:400 13px "DejaVu Sans Condensed", "DejaVu Sans", "Liberation Sans", sans-serif;color:#000;letter-spacing:-0.007px;'>728.184570</span>
<span class=t style='left:520.95px;top:751.72px;font:400 13px "DejaVu Sans Condensed", "DejaVu Sans", "Liberation Sans", sans-serif;color:#000;letter-spacing:-0.007px;'>988.240000</span>
<span class=t style='left:620.90px;top:751.72px;font:400 13px "DejaVu Sans Condensed", "DejaVu Sans", "Liberation Sans", sans-serif;color:#000;letter-spacing:0.007px;'>30.880000</span>
<span class=t style='left:720.85px;top:751.72px;font:400 13px "DejaVu Sans Condensed", "DejaVu Sans", "Liberation Sans", sans-serif;color:#000;letter-spacing:0.025px;'>0.000000</span>
<span class=t style='left:820.80px;top:751.72px;font:400 13px "DejaVu Sans Condensed", "DejaVu Sans", "Liberation Sans", sans-serif;color:#000;letter-spacing:0.025px;'>0.681403</span>
<span class=t style='left:920.75px;top:751.72px;font:400 13px "DejaVu Sans Condensed", "DejaVu Sans", "Liberation Sans", sans-serif;color:#000;letter-spacing:0.007px;'>13.127693</span>
<span class=t style='left:1020.70px;top:751.72px;font:400 13px "DejaVu Sans Condensed", "DejaVu Sans", "Liberation Sans", sans-serif;color:#000;letter-spacing:0.007px;'>58.249032</span>
<div style="left:16.6px;top:768.24px;width:99.95px;height:22.62px;background:linear-gradient(#eef3fb,#dfe9f6 45%,#d6e3f3 55%,#e6eef9);border-right:1px solid #c5d3e8;border-bottom:1px solid #c9d6ea;"></div>
<div style="left:116.55000000000001px;top:768.24px;width:99.95px;height:22.62px;border-right:1px solid #e6e6ec;border-bottom:1px solid #e6e6ec;"></div>
<div style="left:216.5px;top:768.24px;width:99.95px;height:22.62px;border-right:1px solid #e6e6ec;border-bottom:1px solid #e6e6ec;"></div>
<div style="left:316.45000000000005px;top:768.24px;width:99.95px;height:22.62px;border-right:1px solid #e6e6ec;border-bottom:1px solid #e6e6ec;"></div>
<div style="left:416.40000000000003px;top:768.24px;width:99.95px;height:22.62px;border-right:1px solid #e6e6ec;border-bottom:1px solid #e6e6ec;"></div>
<div style="left:516.35px;top:768.24px;width:99.95px;height:22.62px;border-right:1px solid #e6e6ec;border-bottom:1px solid #e6e6ec;"></div>
<div style="left:616.3000000000001px;top:768.24px;width:99.95px;height:22.62px;border-right:1px solid #e6e6ec;border-bottom:1px solid #e6e6ec;"></div>
<div style="left:716.25px;top:768.24px;width:99.95px;height:22.62px;border-right:1px solid #e6e6ec;border-bottom:1px solid #e6e6ec;"></div>
<div style="left:816.2px;top:768.24px;width:99.95px;height:22.62px;border-right:1px solid #e6e6ec;border-bottom:1px solid #e6e6ec;"></div>
<div style="left:916.1500000000001px;top:768.24px;width:99.95px;height:22.62px;border-right:1px solid #e6e6ec;border-bottom:1px solid #e6e6ec;"></div>
<div style="left:1016.1px;top:768.24px;width:99.95px;height:22.62px;border-right:1px solid #e6e6ec;border-bottom:1px solid #e6e6ec;"></div>
<span class=t style='left:21.60px;top:774.34px;font:700 13px "DejaVu Sans Condensed", "DejaVu Sans", "Liberation Sans", sans-serif;color:#000;'>6</span>
<span class=t style='left:121.15px;top:774.34px;font:400 13px "DejaVu Sans Condensed", "DejaVu Sans", "Liberation Sans", sans-serif;color:#000;letter-spacing:0.025px;'>0.997000</span>
<span class=t style='left:221.10px;top:774.34px;font:400 13px "DejaVu Sans Condensed", "DejaVu Sans", "Liberation Sans", sans-serif;color:#000;letter-spacing:0.025px;'>3.000000</span>
<span class=t style='left:321.05px;top:774.34px;font:400 13px "DejaVu Sans Condensed", "DejaVu Sans", "Liberation Sans", sans-serif;color:#000;letter-spacing:-0.007px;'>712.000000</span>
<span class=t style='left:421.00px;top:774.34px;font:400 13px "DejaVu Sans Condensed", "DejaVu Sans", "Liberation Sans", sans-serif;color:#000;letter-spacing:-0.007px;'>714.142456</span>
<span class=t style='left:520.95px;top:774.34px;font:400 13px "DejaVu Sans Condensed", "DejaVu Sans", "Liberation Sans", sans-serif;color:#000;letter-spacing:-0.007px;'>988.240000</span>
<span class=t style='left:620.90px;top:774.34px;font:400 13px "DejaVu Sans Condensed", "DejaVu Sans", "Liberation Sans", sans-serif;color:#000;letter-spacing:0.007px;'>30.880000</span>
<span class=t style='left:720.85px;top:774.34px;font:400 13px "DejaVu Sans Condensed", "DejaVu Sans", "Liberation Sans", sans-serif;color:#000;letter-spacing:0.025px;'>0.000000</span>
<span class=t style='left:820.80px;top:774.34px;font:400 13px "DejaVu Sans Condensed", "DejaVu Sans", "Liberation Sans", sans-serif;color:#000;letter-spacing:0.025px;'>0.681403</span>
<span class=t style='left:920.75px;top:774.34px;font:400 13px "DejaVu Sans Condensed", "DejaVu Sans", "Liberation Sans", sans-serif;color:#000;letter-spacing:0.007px;'>13.127708</span>
<span class=t style='left:1020.70px;top:774.34px;font:400 13px "DejaVu Sans Condensed", "DejaVu Sans", "Liberation Sans", sans-serif;color:#000;letter-spacing:0.007px;'>58.249029</span>
<div style="left:16.6px;top:790.86px;width:99.95px;height:4.740000000000009px;background:#eef3fb;border-right:1px solid #c5d3e8;"></div>
<div style="left:116.55000000000001px;top:790.86px;width:99.95px;height:4.740000000000009px;border-right:1px solid #e6e6ec;"></div>
<div style="left:216.5px;top:790.86px;width:99.95px;height:4.740000000000009px;border-right:1px solid #e6e6ec;"></div>
<div style="left:316.45000000000005px;top:790.86px;width:99.95px;height:4.740000000000009px;border-right:1px solid #e6e6ec;"></div>
<div style="left:416.40000000000003px;top:790.86px;width:99.95px;height:4.740000000000009px;border-right:1px solid #e6e6ec;"></div>
<div style="left:516.35px;top:790.86px;width:99.95px;height:4.740000000000009px;border-right:1px solid #e6e6ec;"></div>
<div style="left:616.3000000000001px;top:790.86px;width:99.95px;height:4.740000000000009px;border-right:1px solid #e6e6ec;"></div>
<div style="left:716.25px;top:790.86px;width:99.95px;height:4.740000000000009px;border-right:1px solid #e6e6ec;"></div>
<div style="left:816.2px;top:790.86px;width:99.95px;height:4.740000000000009px;border-right:1px solid #e6e6ec;"></div>
<div style="left:916.1500000000001px;top:790.86px;width:99.95px;height:4.740000000000009px;border-right:1px solid #e6e6ec;"></div>
<div style="left:1016.1px;top:790.86px;width:99.95px;height:4.740000000000009px;border-right:1px solid #e6e6ec;"></div>
<div style="left:117.95000000000002px;top:634.4px;width:97.35000000000001px;height:19.6px;background:linear-gradient(#f1f7fe,#dbe8fa);border:1px solid #7da2ce;border-radius:2px;"></div>
<span class=t style='left:121.15px;top:638.62px;font:400 13px "DejaVu Sans Condensed", "DejaVu Sans", "Liberation Sans", sans-serif;color:#000;letter-spacing:-0.037px;'>0.996000</span>
<div style="left:1117.4px;top:609.6px;width:24px;height:186.0px;background:#f0f0f0;"></div>
<div style="left:1120.6px;top:633px;width:17.6px;height:20px;background:#cdcdcd;"></div>
<div style="left:16.6px;top:795.6px;width:1124.8000000000002px;height:22.2px;background:#f0f0f0;"></div>
<div style="left:1077px;top:797.6px;width:20.6px;height:17.8px;background:#cdcdcd;"></div>
<svg style="left:1117px;top:608px" width="25" height="188" viewBox="0 0 25 188"><path d="M7.8 16.6 L12.2 12 L16.6 16.6" fill="none" stroke="#505050" stroke-width="1.7"/><path d="M7.8 175 L12.2 179.6 L16.6 175" fill="none" stroke="#505050" stroke-width="1.7"/></svg>
<svg style="left:16px;top:796px" width="1126" height="22" viewBox="0 0 1126 22"><path d="M14.6 6.4 L10.2 10.6 L14.6 14.8" fill="none" stroke="#505050" stroke-width="1.8"/><path d="M1090.4 6.4 L1094.8 10.6 L1090.4 14.8" fill="none" stroke="#505050" stroke-width="1.8"/></svg>
<div style="left:317.3px;top:198px;width:522.0999999999999px;height:419.79999999999995px;background:#fff;border:1px solid #6e6e6e;"></div>
<span class=t style='left:321.60px;top:207.00px;font:400 14.4px "Liberation Sans", sans-serif;color:#000;letter-spacing:0.101px;'>Process all data</span>
<svg style="left:810px;top:207.5px" width="15" height="15" viewBox="0 0 15 15"><path d="M1.4 1.4L13.6 13.6M13.6 1.4L1.4 13.6" stroke="#111" stroke-width="1.15" fill="none"/></svg>
<div style="left:318.3px;top:230.8px;width:520.0999999999999px;height:34px;background:#89abe3;"></div>
<div style="left:713px;top:230.8px;width:125.39999999999998px;height:4px;background:#8fb0e6;"></div>
<div style="left:320px;top:264.5px;width:516.5px;height:203.2px;background:linear-gradient(#d9e8fc,#cfe0fa 30%,#c3d7f7 75%,#c1d5f6);border-radius:0 0 4px 4px;box-shadow:0 0 0 1px #a9c3ee;border-bottom:1.5px solid #a3bfea;"></div>
<div style="left:318.3px;top:264.5px;width:1.8px;height:203px;background:#9ab8ea;"></div>
<div style="left:836.4px;top:264.5px;width:2px;height:203px;background:#9dbaea;"></div>
<div style="left:471.5px;top:236.6px;width:90px;height:28.5px;background:linear-gradient(#f2f7fe,#e3edfb 50%,#d9e8fc);border-radius:4px 4px 0 0;border:1px solid #e9f1fd;border-bottom:none;"></div>
<div style="left:561.2px;top:239px;width:1.6px;height:25.5px;background:#3f62b8;"></div>
<span class=t style='left:331.60px;top:245.20px;font:400 13px "DejaVu Sans Condensed", "DejaVu Sans", "Liberation Sans", sans-serif;color:#1c1c24;letter-spacing:0.369px;'>Fit each</span>
<span class=t style='left:402.60px;top:245.20px;font:400 13px "DejaVu Sans Condensed", "DejaVu Sans", "Liberation Sans", sans-serif;color:#1c1c24;letter-spacing:0.306px;'>Smart fit</span>
<span class=t style='left:477.60px;top:245.20px;font:400 13px "DejaVu Sans Condensed", "DejaVu Sans", "Liberation Sans", sans-serif;color:#1c1c24;letter-spacing:0.383px;'>Repeated fit</span>
<span class=t style='left:574.10px;top:245.20px;font:400 13px "DejaVu Sans Condensed", "DejaVu Sans", "Liberation Sans", sans-serif;color:#1c1c24;letter-spacing:0.306px;'>Conditional fit</span>
<span class=t style='left:680.90px;top:245.20px;font:400 13px "DejaVu Sans Condensed", "DejaVu Sans", "Liberation Sans", sans-serif;color:#1c1c24;letter-spacing:0.411px;'>Traditional Fit</span>
<span class=t style='left:338.40px;top:285.00px;font:400 13px "DejaVu Sans Condensed", "DejaVu Sans", "Liberation Sans", sans-serif;color:#1c1c24;letter-spacing:0.125px;'>Fitting method:</span>
<span class=t style='left:338.40px;top:317.60px;font:400 13px "DejaVu Sans Condensed", "DejaVu Sans", "Liberation Sans", sans-serif;color:#1c1c24;letter-spacing:0.291px;'>Repeated average</span>
<span class=t style='left:379.60px;top:365.20px;font:400 13px "DejaVu Sans Condensed", "DejaVu Sans", "Liberation Sans", sans-serif;color:#1c1c24;letter-spacing:0.152px;'># records to average</span>
<div style="left:524.2px;top:358.8px;width:115.8px;height:27px;background:#fff;border:1px solid #7a7a7a;"></div>
<span class=t style='left:528.20px;top:365.20px;font:400 13px "DejaVu Sans Condensed", "DejaVu Sans", "Liberation Sans", sans-serif;color:#000;'>5</span>
<div style="left:619.2px;top:362.4px;width:16px;height:8px;background:#dcdcdc;border:1px solid #c8c8c8;"></div>
<div style="left:619.2px;top:371.4px;width:16px;height:9.8px;background:#dcdcdc;border:1px solid #c8c8c8;"></div>
<svg style="left:619px;top:362px" width="17" height="20" viewBox="0 0 17 20"><path d="M3.8 7.6L8.2 2.4L12.6 7.6Z M3.8 11.6L12.6 11.6L8.2 17Z" fill="#000"/></svg>
<div style="left:318.6px;top:471px;width:519.6px;height:14px;background:#fff;border:1px solid #9c9c9c;border-radius:4px;box-shadow:inset 0 1px 1px #d0d0d0;"></div>
<span class=t style='left:566.00px;top:469.40px;font:400 15px "DejaVu Sans Condensed", "DejaVu Sans", "Liberation Sans", sans-serif;color:#222;letter-spacing:1.789px;clip-path:inset(0 0 4.5px 0);'>0%</span>
<div style="left:318.3px;top:486.2px;width:520.2px;height:131px;background:#f0f0f0;border:1px solid #a9a9a9;border-radius:3px 3px 0 0;"></div>
<div style="left:328px;top:498.8px;width:131.4px;height:107.6px;background:linear-gradient(#ccddf4,#c6d8f2 50%,#bfd3f0);border:1px solid #a3c0ea;border-radius:4px;"></div>
<span class=t style='left:357.60px;top:544.40px;font:400 13px "DejaVu Sans Condensed", "DejaVu Sans", "Liberation Sans", sans-serif;color:#1c1c24;letter-spacing:0.236px;'>Process &gt;&gt;</span>
<div style="left:480px;top:498.8px;width:11.4px;height:11.4px;background:linear-gradient(135deg,#e2e2e2,#fafafa);border:1px solid #c4c4c4;"></div>
<span class=t style='left:496.80px;top:496.90px;font:400 13px "DejaVu Sans Condensed", "DejaVu Sans", "Liberation Sans", sans-serif;color:#111;letter-spacing:0.016px;'>Plot while processing</span>
<div style="left:480px;top:527.2px;width:11.4px;height:11.4px;background:linear-gradient(135deg,#e2e2e2,#fafafa);border:1px solid #c4c4c4;"></div>
<span class=t style='left:496.80px;top:525.60px;font:400 13px "DejaVu Sans Condensed", "DejaVu Sans", "Liberation Sans", sans-serif;color:#111;letter-spacing:-0.076px;'>Use smoothing guideliner</span>
<div style="left:480px;top:557.6px;width:11.4px;height:11.4px;background:linear-gradient(135deg,#e2e2e2,#fafafa);border:1px solid #c4c4c4;"></div>
<span class=t style='left:496.80px;top:555.60px;font:400 13px "DejaVu Sans Condensed", "DejaVu Sans", "Liberation Sans", sans-serif;color:#111;letter-spacing:0.266px;'>Interpolate aux data too</span>
<div style="left:480px;top:587.6px;width:11.4px;height:11.4px;background:linear-gradient(135deg,#e2e2e2,#fafafa);border:1px solid #c4c4c4;"></div>
<span class=t style='left:496.80px;top:585.60px;font:400 13px "DejaVu Sans Condensed", "DejaVu Sans", "Liberation Sans", sans-serif;color:#111;letter-spacing:0.191px;'>Use Non-negative Least Squares</span>
<svg style="left:480px;top:557px" width="13" height="13" viewBox="0 0 13 13"><path d="M2.6 5.2L5 9.6L9.6 2.2" fill="none" stroke="#3f54ae" stroke-width="1.7"/></svg>
<div style="left:499px;top:30px;width:254px;height:74.8px;border:5px solid #ec1c24;"></div>
</div>
</body></html>
